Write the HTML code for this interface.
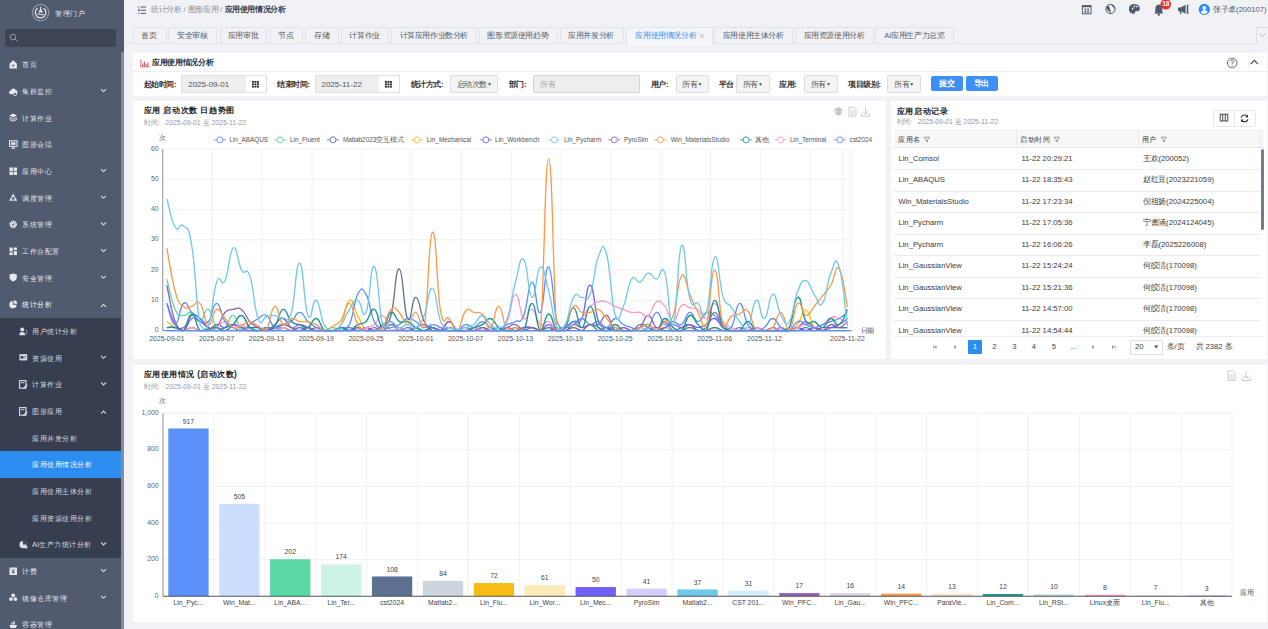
<!DOCTYPE html><html><head><meta charset="utf-8"><style>
html,body{margin:0;padding:0;}
body{width:1268px;height:629px;overflow:hidden;position:relative;background:#f0f2f5;font-family:"Liberation Sans", sans-serif;}
.t{position:absolute;white-space:nowrap;}
.r{position:absolute;}
</style></head><body>
<div class="r" style="left:0px;top:0px;width:124px;height:629px;background:#515a6e;"></div>
<svg class="r" style="left:30px;top:2px;" width="22" height="22" viewBox="0 0 22 22"><circle cx="10.6" cy="10.6" r="8.1" fill="none" stroke="#a3a9b5" stroke-width="1.3" stroke-dasharray="1.6 0.6"/><path d="M13.64 6.26 A5.3 5.3 0 1 1 7.56 6.26" fill="none" stroke="#f4f5f7" stroke-width="1.1"/><path d="M10.1 4.8 H11.3 V7.3 L13.1 10.6 H8.3 L10.1 7.3 Z" fill="#dfe2e7"/><path d="M7.4 12.3 Q9 11.4 10.6 12.4 Q12.2 13.4 13.8 12.3" fill="none" stroke="#f4f5f7" stroke-width="1"/></svg>
<div class="t" style="left:55px;top:8.99px;font-size:7.4px;line-height:9.62px;color:#e8eaef;font-weight:normal;"><span style="font-size:7px;letter-spacing:0.5px;">管理门户</span></div>
<div class="r" style="left:5px;top:29px;width:111px;height:18px;background:#3e4453;border-radius:2px;"></div>
<svg class="r" style="left:9px;top:33px;" width="10" height="10" viewBox="0 0 10 10"><circle cx="4" cy="4" r="2.8" fill="none" stroke="#9aa0ad" stroke-width="0.9"/><path d="M6 6 L8.3 8.3" stroke="#9aa0ad" stroke-width="0.9"/></svg>
<svg class="r" style="left:9px;top:60.1px;" width="9" height="9" viewBox="0 0 9 9"><path d="M0.5 3.8 L4.2 0.3 L7.9 3.8 V8.5 H0.5 Z" fill="#e6e8ec"/><circle cx="4.2" cy="5.6" r="1" fill="#515a6e"/></svg>
<div class="t" style="left:22px;top:60.45px;font-size:7.45px;line-height:9.69px;color:#e3e5ea;font-weight:normal;"><span style="font-size:7px;letter-spacing:0.55px;">首页</span></div>
<svg class="r" style="left:9px;top:86.77px;" width="9" height="9" viewBox="0 0 9 9"><path d="M1.8 7.2 A1.8 1.8 0 0 1 1.8 3.6 A2.6 2.6 0 0 1 6.6 2.9 A2 2 0 0 1 7.4 6.7 Z" fill="#e6e8ec"/><circle cx="6" cy="7" r="1.6" fill="#515a6e" stroke="#e6e8ec" stroke-width="0.8"/></svg>
<div class="t" style="left:22px;top:87.12px;font-size:7.45px;line-height:9.69px;color:#e3e5ea;font-weight:normal;"><span style="font-size:7px;letter-spacing:0.55px;">集群监控</span></div>
<svg class="r" style="left:0px;top:0px;pointer-events:none;" width="124" height="629" viewBox="0 0 124 629"><path d="M101.0 89.167 L103.5 91.667 L106.0 89.167" fill="none" stroke="#cfd2d9" stroke-width="1.1"/></svg>
<svg class="r" style="left:9px;top:113.43px;" width="9" height="9" viewBox="0 0 9 9"><path d="M4.2 0.5 L8 2.5 L4.2 4.5 L0.4 2.5 Z" fill="#e6e8ec"/><path d="M0.4 4.4 L4.2 6.4 L8 4.4" fill="none" stroke="#e6e8ec" stroke-width="1"/><path d="M0.4 6.3 L4.2 8.3 L8 6.3" fill="none" stroke="#e6e8ec" stroke-width="1"/></svg>
<div class="t" style="left:22px;top:113.79px;font-size:7.45px;line-height:9.69px;color:#e3e5ea;font-weight:normal;"><span style="font-size:7px;letter-spacing:0.55px;">计算作业</span></div>
<svg class="r" style="left:9px;top:140.1px;" width="9" height="9" viewBox="0 0 9 9"><rect x="0.5" y="0.8" width="7.5" height="5.6" fill="none" stroke="#e6e8ec" stroke-width="1.1"/><rect x="2" y="2.3" width="4.5" height="2.6" fill="#e6e8ec"/><path d="M2.5 8.3 H6 M4.2 6.4 V8.3" stroke="#e6e8ec" stroke-width="1"/></svg>
<div class="t" style="left:22px;top:140.46px;font-size:7.45px;line-height:9.69px;color:#e3e5ea;font-weight:normal;"><span style="font-size:7px;letter-spacing:0.55px;">图形会话</span></div>
<svg class="r" style="left:9px;top:166.77px;" width="9" height="9" viewBox="0 0 9 9"><rect x="0.5" y="0.5" width="3.4" height="3.4" fill="#e6e8ec"/><rect x="4.6" y="0.5" width="3.4" height="3.4" fill="#e6e8ec"/><rect x="0.5" y="4.6" width="3.4" height="3.4" fill="#e6e8ec"/><rect x="4.6" y="4.6" width="3.4" height="3.4" fill="#e6e8ec"/></svg>
<div class="t" style="left:22px;top:167.12px;font-size:7.45px;line-height:9.69px;color:#e3e5ea;font-weight:normal;"><span style="font-size:7px;letter-spacing:0.55px;">应用中心</span></div>
<svg class="r" style="left:0px;top:0px;pointer-events:none;" width="124" height="629" viewBox="0 0 124 629"><path d="M101.0 169.168 L103.5 171.668 L106.0 169.168" fill="none" stroke="#cfd2d9" stroke-width="1.1"/></svg>
<svg class="r" style="left:9px;top:193.44px;" width="9" height="9" viewBox="0 0 9 9"><path d="M4.2 0.6 L8.2 7.8 H0.2 Z" fill="#e6e8ec"/><path d="M4.2 3.6 L6 6.6 H2.4 Z" fill="#515a6e"/><path d="M2.6 3.8 L3.6 5 M5.8 3.8 L4.8 5 M4.2 7.9 V6.6" stroke="#515a6e" stroke-width="0.6"/></svg>
<div class="t" style="left:22px;top:193.79px;font-size:7.45px;line-height:9.69px;color:#e3e5ea;font-weight:normal;"><span style="font-size:7px;letter-spacing:0.55px;">调度管理</span></div>
<svg class="r" style="left:0px;top:0px;pointer-events:none;" width="124" height="629" viewBox="0 0 124 629"><path d="M101.0 195.835 L103.5 198.335 L106.0 195.835" fill="none" stroke="#cfd2d9" stroke-width="1.1"/></svg>
<svg class="r" style="left:9px;top:220.1px;" width="9" height="9" viewBox="0 0 9 9"><circle cx="4.2" cy="4.4" r="2.9" fill="none" stroke="#e6e8ec" stroke-width="1.9" stroke-dasharray="1.3 0.55"/><circle cx="4.2" cy="4.4" r="2.3" fill="#e6e8ec"/><circle cx="4.2" cy="4.4" r="1" fill="#515a6e"/></svg>
<div class="t" style="left:22px;top:220.46px;font-size:7.45px;line-height:9.69px;color:#e3e5ea;font-weight:normal;"><span style="font-size:7px;letter-spacing:0.55px;">系统管理</span></div>
<svg class="r" style="left:0px;top:0px;pointer-events:none;" width="124" height="629" viewBox="0 0 124 629"><path d="M101.0 222.502 L103.5 225.002 L106.0 222.502" fill="none" stroke="#cfd2d9" stroke-width="1.1"/></svg>
<svg class="r" style="left:9px;top:246.77px;" width="9" height="9" viewBox="0 0 9 9"><rect x="0.5" y="0.5" width="3.2" height="4" fill="#e6e8ec"/><rect x="4.7" y="0.5" width="3.2" height="2.6" fill="#e6e8ec"/><rect x="0.5" y="5.5" width="3.2" height="2.6" fill="#e6e8ec"/><rect x="4.7" y="4.1" width="3.2" height="4" fill="#e6e8ec"/></svg>
<div class="t" style="left:22px;top:247.12px;font-size:7.45px;line-height:9.69px;color:#e3e5ea;font-weight:normal;"><span style="font-size:7px;letter-spacing:0.55px;">工作台配置</span></div>
<svg class="r" style="left:0px;top:0px;pointer-events:none;" width="124" height="629" viewBox="0 0 124 629"><path d="M101.0 249.169 L103.5 251.669 L106.0 249.169" fill="none" stroke="#cfd2d9" stroke-width="1.1"/></svg>
<svg class="r" style="left:9px;top:273.44px;" width="9" height="9" viewBox="0 0 9 9"><path d="M4.2 0.4 L7.8 1.5 V4.6 Q7.6 7.4 4.2 8.6 Q0.8 7.4 0.6 4.6 V1.5 Z" fill="#e6e8ec"/></svg>
<div class="t" style="left:22px;top:273.79px;font-size:7.45px;line-height:9.69px;color:#e3e5ea;font-weight:normal;"><span style="font-size:7px;letter-spacing:0.55px;">安全管理</span></div>
<svg class="r" style="left:0px;top:0px;pointer-events:none;" width="124" height="629" viewBox="0 0 124 629"><path d="M101.0 275.836 L103.5 278.336 L106.0 275.836" fill="none" stroke="#cfd2d9" stroke-width="1.1"/></svg>
<svg class="r" style="left:9px;top:300.1px;" width="9" height="9" viewBox="0 0 9 9"><path d="M3.8 0.9 A3.7 3.7 0 1 0 7.7 4.8 H3.8 Z" fill="#e6e8ec"/><path d="M4.7 0.2 A3.7 3.7 0 0 1 8.3 3.8 H4.7 Z" fill="#e6e8ec"/></svg>
<div class="t" style="left:22px;top:300.46px;font-size:7.45px;line-height:9.69px;color:#ffffff;font-weight:normal;"><span style="font-size:7px;letter-spacing:0.55px;">统计分析</span></div>
<svg class="r" style="left:0px;top:0px;pointer-events:none;" width="124" height="629" viewBox="0 0 124 629"><path d="M101.0 306.903 L103.5 304.403 L106.0 306.903" fill="none" stroke="#e4e6ea" stroke-width="1.1"/></svg>
<div class="r" style="left:0px;top:318px;width:120.5px;height:239.6px;background:#363e4f;"></div>
<svg class="r" style="left:19px;top:326.77px;" width="9" height="9" viewBox="0 0 9 9"><circle cx="3.2" cy="2.5" r="2" fill="#dcdfe5"/><path d="M0.2 8.3 Q0.2 5 3.2 5 Q6.2 5 6.2 8.3 Z" fill="#dcdfe5"/><path d="M6.8 3.5 H8.3 M6.8 5.2 H8.3 M6.8 6.9 H8.3" stroke="#dcdfe5" stroke-width="0.6"/></svg>
<div class="t" style="left:32px;top:327.12px;font-size:7.45px;line-height:9.69px;color:#d9dce2;font-weight:normal;"><span style="font-size:7px;letter-spacing:0.55px;">用户统计分析</span></div>
<svg class="r" style="left:19px;top:353.44px;" width="9" height="9" viewBox="0 0 9 9"><rect x="0.4" y="1.2" width="7.8" height="6.2" fill="#dcdfe5"/><rect x="1.5" y="3" width="3" height="2.6" fill="#363e4f"/><path d="M5.3 3.5 H7.2 M5.3 5 H7.2" stroke="#363e4f" stroke-width="0.6"/></svg>
<div class="t" style="left:32px;top:353.79px;font-size:7.45px;line-height:9.69px;color:#d9dce2;font-weight:normal;"><span style="font-size:7px;letter-spacing:0.55px;">资源使用</span></div>
<svg class="r" style="left:0px;top:0px;pointer-events:none;" width="124" height="629" viewBox="0 0 124 629"><path d="M101.0 355.837 L103.5 358.337 L106.0 355.837" fill="none" stroke="#cfd2d9" stroke-width="1.1"/></svg>
<svg class="r" style="left:19px;top:380.1px;" width="9" height="9" viewBox="0 0 9 9"><rect x="0.6" y="0.6" width="6.4" height="7.6" fill="none" stroke="#dcdfe5" stroke-width="1.1"/><rect x="2" y="2.2" width="3.4" height="1" fill="#dcdfe5"/><path d="M4.5 8.4 L8.2 4.7" stroke="#dcdfe5" stroke-width="1.4"/></svg>
<div class="t" style="left:32px;top:380.46px;font-size:7.45px;line-height:9.69px;color:#d9dce2;font-weight:normal;"><span style="font-size:7px;letter-spacing:0.55px;">计算作业</span></div>
<svg class="r" style="left:0px;top:0px;pointer-events:none;" width="124" height="629" viewBox="0 0 124 629"><path d="M101.0 382.504 L103.5 385.004 L106.0 382.504" fill="none" stroke="#cfd2d9" stroke-width="1.1"/></svg>
<svg class="r" style="left:19px;top:406.77px;" width="9" height="9" viewBox="0 0 9 9"><rect x="0.6" y="0.6" width="6.4" height="7.6" fill="none" stroke="#dcdfe5" stroke-width="1.1"/><rect x="2" y="2.2" width="3.4" height="1" fill="#dcdfe5"/><path d="M4.5 8.4 L8.2 4.7" stroke="#dcdfe5" stroke-width="1.4"/></svg>
<div class="t" style="left:32px;top:407.13px;font-size:7.45px;line-height:9.69px;color:#d9dce2;font-weight:normal;"><span style="font-size:7px;letter-spacing:0.55px;">图形应用</span></div>
<svg class="r" style="left:0px;top:0px;pointer-events:none;" width="124" height="629" viewBox="0 0 124 629"><path d="M101.0 413.5710000000001 L103.5 411.0710000000001 L106.0 413.5710000000001" fill="none" stroke="#cfd2d9" stroke-width="1.1"/></svg>
<div class="t" style="left:32px;top:433.79px;font-size:7.45px;line-height:9.69px;color:#d9dce2;font-weight:normal;"><span style="font-size:7px;letter-spacing:0.55px;">应用并发分析</span></div>
<div class="r" style="left:0px;top:451.27px;width:120.5px;height:26.67px;background:#2d8cf0;"></div>
<div class="t" style="left:32px;top:460.46px;font-size:7.45px;line-height:9.69px;color:#ffffff;font-weight:normal;"><span style="font-size:7px;letter-spacing:0.55px;">应用使用情况分析</span></div>
<div class="t" style="left:32px;top:487.13px;font-size:7.45px;line-height:9.69px;color:#d9dce2;font-weight:normal;"><span style="font-size:7px;letter-spacing:0.55px;">应用使用主体分析</span></div>
<div class="t" style="left:32px;top:513.79px;font-size:7.45px;line-height:9.69px;color:#d9dce2;font-weight:normal;"><span style="font-size:7px;letter-spacing:0.55px;">应用资源使用分析</span></div>
<svg class="r" style="left:19px;top:540.11px;" width="9" height="9" viewBox="0 0 9 9"><circle cx="4" cy="4.6" r="3.6" fill="#dcdfe5"/><path d="M4 4.6 L4 1 A3.6 3.6 0 0 1 7.6 4.6 Z" fill="#363e4f"/><circle cx="7" cy="7.2" r="1.4" fill="#dcdfe5"/></svg>
<div class="t" style="left:32px;top:540.46px;font-size:7.45px;line-height:9.69px;color:#d9dce2;font-weight:normal;">AI<span style="font-size:7px;letter-spacing:0.55px;">生产力统计分析</span></div>
<svg class="r" style="left:0px;top:0px;pointer-events:none;" width="124" height="629" viewBox="0 0 124 629"><path d="M101.0 542.506 L103.5 545.006 L106.0 542.506" fill="none" stroke="#cfd2d9" stroke-width="1.1"/></svg>
<svg class="r" style="left:9px;top:566.77px;" width="9" height="9" viewBox="0 0 9 9"><rect x="0.5" y="0.5" width="7.5" height="7.5" fill="#e6e8ec"/><path d="M2.6 1.9 L4.25 4.1 L5.9 1.9 M4.25 4.1 V6.8 M2.9 4.5 H5.6 M2.9 5.6 H5.6" stroke="#515a6e" stroke-width="0.7" fill="none"/></svg>
<div class="t" style="left:22px;top:567.13px;font-size:7.45px;line-height:9.69px;color:#e3e5ea;font-weight:normal;"><span style="font-size:7px;letter-spacing:0.55px;">计费</span></div>
<svg class="r" style="left:0px;top:0px;pointer-events:none;" width="124" height="629" viewBox="0 0 124 629"><path d="M101.0 569.173 L103.5 571.673 L106.0 569.173" fill="none" stroke="#cfd2d9" stroke-width="1.1"/></svg>
<svg class="r" style="left:9px;top:593.44px;" width="9" height="9" viewBox="0 0 9 9"><circle cx="4.2" cy="2.3" r="1.9" fill="#e6e8ec"/><circle cx="2" cy="6.1" r="1.9" fill="#e6e8ec"/><circle cx="6.4" cy="6.1" r="1.9" fill="#e6e8ec"/></svg>
<div class="t" style="left:22px;top:593.8px;font-size:7.45px;line-height:9.69px;color:#e3e5ea;font-weight:normal;"><span style="font-size:7px;letter-spacing:0.55px;">镜像仓库管理</span></div>
<svg class="r" style="left:0px;top:0px;pointer-events:none;" width="124" height="629" viewBox="0 0 124 629"><path d="M101.0 595.84 L103.5 598.34 L106.0 595.84" fill="none" stroke="#cfd2d9" stroke-width="1.1"/></svg>
<svg class="r" style="left:9px;top:620.11px;" width="9" height="9" viewBox="0 0 9 9"><path d="M0.4 5 H8 L6.8 8 H1.6 Z" fill="#e6e8ec"/><rect x="2.3" y="2.6" width="1.5" height="2" fill="#e6e8ec"/><rect x="4.3" y="1.2" width="1.5" height="3.4" fill="#e6e8ec"/></svg>
<div class="t" style="left:22px;top:620.46px;font-size:7.45px;line-height:9.69px;color:#e3e5ea;font-weight:normal;"><span style="font-size:7px;letter-spacing:0.55px;">容器管理</span></div>
<div class="r" style="left:120.5px;top:52px;width:3.5px;height:577px;background:#858b99;"></div>
<svg class="r" style="left:137px;top:6px;" width="10" height="9" viewBox="0 0 10 9"><path d="M3.5 1 H9 M3.5 4.2 H9 M3.5 7.4 H9 M0.8 1 H2 M0.8 7.4 H2" stroke="#515a6e" stroke-width="1"/><path d="M2.6 2.6 L0.6 4.2 L2.6 5.8 Z" fill="#515a6e"/></svg>
<div class="t" style="left:151px;top:5.36px;font-size:7.6px;line-height:9.88px;color:#333;font-weight:normal;"><span style="color:#888d99"><span style="font-size:8px;letter-spacing:-0.4px;">统计分析</span> / <span style="font-size:8px;letter-spacing:-0.4px;">图形应用</span> / </span><span style="color:#2b303b;-webkit-text-stroke:0.25px #2b303b"><span style="font-size:8px;letter-spacing:-0.4px;">应用使用情况分析</span></span></div>
<svg class="r" style="left:1081px;top:4px;" width="12" height="12" viewBox="0 0 12 12"><rect x="1.4" y="1.6" width="8.6" height="8.2" fill="none" stroke="#515a6e" stroke-width="1"/><rect x="1.4" y="1.6" width="8.6" height="1.6" fill="#515a6e"/><rect x="3.4" y="4.6" width="1.8" height="1.7" fill="#515a6e"/><rect x="6.2" y="4.6" width="1.8" height="1.7" fill="#515a6e"/><rect x="3.4" y="7" width="1.8" height="1.7" fill="#515a6e"/><rect x="6.2" y="7" width="1.8" height="1.7" fill="#515a6e"/></svg>
<svg class="r" style="left:1104px;top:3px;" width="13" height="13" viewBox="0 0 13 13"><circle cx="6.5" cy="6" r="4.6" fill="none" stroke="#515a6e" stroke-width="1"/><path d="M3 3.2 Q4.6 2.4 5.6 3.6 Q5 5 6 6 Q7 7.5 6.4 10.4 Q5.2 8.5 4.2 7.4 Q2.4 6.6 2.6 4.6 Z M7.6 1.8 Q7.6 3.2 8.8 3.8 Q10.4 4.6 10.9 6.8 Q11 4 9.6 2.6 Z" fill="#515a6e"/></svg>
<svg class="r" style="left:1129px;top:3px;" width="12" height="12" viewBox="0 0 12 12"><path d="M6 1.2 A4.9 4.9 0 1 0 5.2 10.8 Q6.2 10.8 6 9.6 Q5.6 8.2 7 8.2 H8.6 Q10.9 8.2 10.9 5.8 Q10.7 1.2 6 1.2 Z" fill="#515a6e"/><circle cx="3.6" cy="5.6" r="0.9" fill="#f0f2f5"/><circle cx="5.4" cy="3.4" r="0.9" fill="#f0f2f5"/><circle cx="8" cy="3.6" r="0.9" fill="#f0f2f5"/></svg>
<svg class="r" style="left:1153px;top:3px;" width="12" height="13" viewBox="0 0 12 13"><path d="M5.8 1.5 Q9.3 1.8 9.3 6 V9 L10.4 10.4 H1.2 L2.3 9 V6 Q2.3 1.8 5.8 1.5 Z" fill="#515a6e"/><circle cx="5.8" cy="11.6" r="1.2" fill="#515a6e"/></svg>
<svg class="r" style="left:1160px;top:-1px;" width="12" height="11" viewBox="0 0 12 11"><circle cx="5.8" cy="5.3" r="5.3" fill="#ed2c2c"/></svg>
<div class="t" style="left:1165.8px;transform:translateX(-50%);top:0.31px;font-size:6.6px;line-height:8.58px;color:#fff;font-weight:bold;">18</div>
<svg class="r" style="left:1177px;top:3px;" width="12" height="13" viewBox="0 0 12 13"><path d="M1 4.6 H3.6 L8.6 1.8 V10.8 L3.6 8 H1 Z" fill="#515a6e"/><rect x="9.8" y="1.6" width="1.5" height="9.4" fill="#515a6e"/><path d="M2.4 8 L3.2 11 H4.6 L4 8" fill="#515a6e"/></svg>
<svg class="r" style="left:1198px;top:3px;" width="13" height="13" viewBox="0 0 13 13"><circle cx="6.3" cy="6.4" r="5.6" fill="#2d8cf0"/><circle cx="6.3" cy="4.8" r="1.9" fill="#fff"/><path d="M2.9 9.6 Q3.4 6.9 6.3 6.9 Q9.2 6.9 9.7 9.6 Q8.4 11 6.3 11 Q4.2 11 2.9 9.6 Z" fill="#fff"/></svg>
<div class="t" style="left:1213px;top:4.86px;font-size:7.6px;line-height:9.88px;color:#515a6e;font-weight:normal;"><span style="font-size:8px;letter-spacing:-0.3px;">张子卓</span>(200107)</div>
<div class="r" style="left:132.5px;top:27.3px;width:32.0px;height:15.7px;background:#f0f2f5;border:1px solid #e0e3e7;border-bottom:none;border-radius:2px 2px 0 0;"></div>
<div class="t" style="left:149.0px;transform:translateX(-50%);top:30.73px;font-size:7.5px;line-height:9.75px;color:#555a66;font-weight:normal;"><span style="font-size:8px;letter-spacing:-0.4px;">首页</span></div>
<div class="r" style="left:168.2px;top:27.3px;width:47.0px;height:15.7px;background:#f0f2f5;border:1px solid #e0e3e7;border-bottom:none;border-radius:2px 2px 0 0;"></div>
<div class="t" style="left:192.2px;transform:translateX(-50%);top:30.73px;font-size:7.5px;line-height:9.75px;color:#555a66;font-weight:normal;"><span style="font-size:8px;letter-spacing:-0.4px;">安全审核</span></div>
<div class="r" style="left:219.5px;top:27.3px;width:45.9px;height:15.7px;background:#f0f2f5;border:1px solid #e0e3e7;border-bottom:none;border-radius:2px 2px 0 0;"></div>
<div class="t" style="left:242.95px;transform:translateX(-50%);top:30.73px;font-size:7.5px;line-height:9.75px;color:#555a66;font-weight:normal;"><span style="font-size:8px;letter-spacing:-0.4px;">应用审批</span></div>
<div class="r" style="left:269.7px;top:27.3px;width:31.7px;height:15.7px;background:#f0f2f5;border:1px solid #e0e3e7;border-bottom:none;border-radius:2px 2px 0 0;"></div>
<div class="t" style="left:286.04999999999995px;transform:translateX(-50%);top:30.73px;font-size:7.5px;line-height:9.75px;color:#555a66;font-weight:normal;"><span style="font-size:8px;letter-spacing:-0.4px;">节点</span></div>
<div class="r" style="left:305.4px;top:27.3px;width:31.9px;height:15.7px;background:#f0f2f5;border:1px solid #e0e3e7;border-bottom:none;border-radius:2px 2px 0 0;"></div>
<div class="t" style="left:321.85px;transform:translateX(-50%);top:30.73px;font-size:7.5px;line-height:9.75px;color:#555a66;font-weight:normal;"><span style="font-size:8px;letter-spacing:-0.4px;">存储</span></div>
<div class="r" style="left:340.8px;top:27.3px;width:46.7px;height:15.7px;background:#f0f2f5;border:1px solid #e0e3e7;border-bottom:none;border-radius:2px 2px 0 0;"></div>
<div class="t" style="left:364.65px;transform:translateX(-50%);top:30.73px;font-size:7.5px;line-height:9.75px;color:#555a66;font-weight:normal;"><span style="font-size:8px;letter-spacing:-0.4px;">计算作业</span></div>
<div class="r" style="left:391.2px;top:27.3px;width:84.2px;height:15.7px;background:#f0f2f5;border:1px solid #e0e3e7;border-bottom:none;border-radius:2px 2px 0 0;"></div>
<div class="t" style="left:433.79999999999995px;transform:translateX(-50%);top:30.73px;font-size:7.5px;line-height:9.75px;color:#555a66;font-weight:normal;"><span style="font-size:8px;letter-spacing:-0.4px;">计算应用作业数分析</span></div>
<div class="r" style="left:479px;top:27.3px;width:76.8px;height:15.7px;background:#f0f2f5;border:1px solid #e0e3e7;border-bottom:none;border-radius:2px 2px 0 0;"></div>
<div class="t" style="left:517.9px;transform:translateX(-50%);top:30.73px;font-size:7.5px;line-height:9.75px;color:#555a66;font-weight:normal;"><span style="font-size:8px;letter-spacing:-0.4px;">图形资源使用趋势</span></div>
<div class="r" style="left:559.5px;top:27.3px;width:62.0px;height:15.7px;background:#f0f2f5;border:1px solid #e0e3e7;border-bottom:none;border-radius:2px 2px 0 0;"></div>
<div class="t" style="left:591.0px;transform:translateX(-50%);top:30.73px;font-size:7.5px;line-height:9.75px;color:#555a66;font-weight:normal;"><span style="font-size:8px;letter-spacing:-0.4px;">应用并发分析</span></div>
<div class="r" style="left:625.9px;top:27.3px;width:84.8px;height:16.5px;background:#f3f5f8;border:1px solid #e0e3e7;border-bottom:none;border-radius:2px 2px 0 0;"></div>
<div class="t" style="left:635.4px;top:30.73px;font-size:7.5px;line-height:9.75px;color:#3a8ef0;font-weight:normal;"><span style="font-size:8px;letter-spacing:-0.4px;">应用使用情况分析</span></div>
<svg class="r" style="left:697.7px;top:31.5px;" width="8" height="8" viewBox="0 0 8 8"><path d="M1.5 1.5 L6 6 M6 1.5 L1.5 6" stroke="#aaa" stroke-width="0.8"/></svg>
<div class="r" style="left:714.4px;top:27.3px;width:76.7px;height:15.7px;background:#f0f2f5;border:1px solid #e0e3e7;border-bottom:none;border-radius:2px 2px 0 0;"></div>
<div class="t" style="left:753.25px;transform:translateX(-50%);top:30.73px;font-size:7.5px;line-height:9.75px;color:#555a66;font-weight:normal;"><span style="font-size:8px;letter-spacing:-0.4px;">应用使用主体分析</span></div>
<div class="r" style="left:795.4px;top:27.3px;width:76.2px;height:15.7px;background:#f0f2f5;border:1px solid #e0e3e7;border-bottom:none;border-radius:2px 2px 0 0;"></div>
<div class="t" style="left:834.0px;transform:translateX(-50%);top:30.73px;font-size:7.5px;line-height:9.75px;color:#555a66;font-weight:normal;"><span style="font-size:8px;letter-spacing:-0.4px;">应用资源使用分析</span></div>
<div class="r" style="left:875.3px;top:27.3px;width:77.0px;height:15.7px;background:#f0f2f5;border:1px solid #e0e3e7;border-bottom:none;border-radius:2px 2px 0 0;"></div>
<div class="t" style="left:914.3px;transform:translateX(-50%);top:30.73px;font-size:7.5px;line-height:9.75px;color:#555a66;font-weight:normal;">AI<span style="font-size:8px;letter-spacing:-0.4px;">应用生产力总览</span></div>
<div class="r" style="left:124px;top:43px;width:501.9px;height:0.8px;background:#e3e5e9;"></div>
<div class="r" style="left:711.7px;top:43px;width:556.3px;height:0.8px;background:#e3e5e9;"></div>
<div class="r" style="left:1255.5px;top:27.2px;width:14px;height:15.8px;background:#f0f2f5;border:1px solid #dcdee2;border-bottom:none;"></div>
<svg class="r" style="left:1258px;top:31px;" width="10" height="8" viewBox="0 0 10 8"><path d="M1.5 2.5 L4.5 5.5 L7.5 2.5" fill="none" stroke="#b0b4bc" stroke-width="0.9"/></svg>
<div class="r" style="left:133px;top:53px;width:1134px;height:42.7px;background:#fff;"></div>
<div class="r" style="left:133px;top:71.2px;width:1134px;height:0.7px;background:#eceef1;"></div>
<svg class="r" style="left:140px;top:58.5px;" width="10" height="9" viewBox="0 0 10 9"><path d="M0.8 0.5 V7.8 H9.5" fill="none" stroke="#c6626b" stroke-width="0.9"/><path d="M2.6 7.4 V4.5 M4.4 7.4 V2.6 M6.2 7.4 V5 M8 7.4 V3.4" stroke="#c55a66" stroke-width="1.1"/></svg>
<div class="t" style="left:152px;top:58.36px;font-size:7.6px;line-height:9.88px;color:#2a2f3a;font-weight:bold;"><span style="font-size:8px;letter-spacing:-0.35px;">应用使用情况分析</span></div>
<svg class="r" style="left:1226px;top:56.5px;" width="12" height="12" viewBox="0 0 12 12"><circle cx="6.2" cy="6" r="4.8" fill="none" stroke="#515a6e" stroke-width="0.9"/><path d="M4.6 4.6 Q4.6 3 6.2 3 Q7.8 3 7.8 4.5 Q7.8 5.5 6.2 6 V7" fill="none" stroke="#515a6e" stroke-width="0.9"/><circle cx="6.2" cy="8.5" r="0.6" fill="#515a6e"/></svg>
<div class="r" style="left:1247.5px;top:53px;width:0.7px;height:18.2px;background:#f1f2f4;"></div>
<svg class="r" style="left:1249px;top:58px;" width="11" height="8" viewBox="0 0 11 8"><path d="M1.8 6 L5.4 2.4 L9 6" fill="none" stroke="#515a6e" stroke-width="1.3"/></svg>
<div class="t" style="left:143.7px;top:79.92px;font-size:7.5px;line-height:9.75px;color:#333;font-weight:bold;"><span style="font-size:8px;letter-spacing:-0.4px;">起始时间</span>:</div>
<div class="r" style="left:181.2px;top:75.3px;width:83.5px;height:15.4px;border:1px solid #dfe1e5;border-radius:0px;background:#fff;"></div>
<div class="r" style="left:182.2px;top:76.3px;width:63.8px;height:15.4px;background:#eeeeee;"></div>
<div class="t" style="left:188.2px;top:79.6px;font-size:8px;line-height:10.4px;color:#555;font-weight:normal;">2025-09-01</div>
<svg class="r" style="left:252px;top:81px;" width="7" height="7" viewBox="0 0 7 7"><rect x="0.0" y="0.0" width="1.9" height="1.8" fill="#2a2a2a"/><rect x="0.0" y="2.4" width="1.9" height="1.8" fill="#2a2a2a"/><rect x="0.0" y="4.8" width="1.9" height="1.8" fill="#2a2a2a"/><rect x="2.5" y="0.0" width="1.9" height="1.8" fill="#2a2a2a"/><rect x="2.5" y="2.4" width="1.9" height="1.8" fill="#2a2a2a"/><rect x="2.5" y="4.8" width="1.9" height="1.8" fill="#2a2a2a"/><rect x="5.0" y="0.0" width="1.9" height="1.8" fill="#2a2a2a"/><rect x="5.0" y="2.4" width="1.9" height="1.8" fill="#2a2a2a"/><rect x="5.0" y="4.8" width="1.9" height="1.8" fill="#2a2a2a"/></svg>
<div class="t" style="left:277.2px;top:79.92px;font-size:7.5px;line-height:9.75px;color:#333;font-weight:bold;"><span style="font-size:8px;letter-spacing:-0.4px;">结束时间</span>:</div>
<div class="r" style="left:314.5px;top:75.3px;width:83.1px;height:15.4px;border:1px solid #dfe1e5;border-radius:0px;background:#fff;"></div>
<div class="r" style="left:315.5px;top:76.3px;width:63.5px;height:15.4px;background:#eeeeee;"></div>
<div class="t" style="left:321.5px;top:79.6px;font-size:8px;line-height:10.4px;color:#555;font-weight:normal;">2025-11-22</div>
<svg class="r" style="left:385px;top:81px;" width="7" height="7" viewBox="0 0 7 7"><rect x="0.0" y="0.0" width="1.9" height="1.8" fill="#2a2a2a"/><rect x="0.0" y="2.4" width="1.9" height="1.8" fill="#2a2a2a"/><rect x="0.0" y="4.8" width="1.9" height="1.8" fill="#2a2a2a"/><rect x="2.5" y="0.0" width="1.9" height="1.8" fill="#2a2a2a"/><rect x="2.5" y="2.4" width="1.9" height="1.8" fill="#2a2a2a"/><rect x="2.5" y="4.8" width="1.9" height="1.8" fill="#2a2a2a"/><rect x="5.0" y="0.0" width="1.9" height="1.8" fill="#2a2a2a"/><rect x="5.0" y="2.4" width="1.9" height="1.8" fill="#2a2a2a"/><rect x="5.0" y="4.8" width="1.9" height="1.8" fill="#2a2a2a"/></svg>
<div class="t" style="left:410.5px;top:79.92px;font-size:7.5px;line-height:9.75px;color:#333;font-weight:bold;"><span style="font-size:8px;letter-spacing:-0.4px;">统计方式</span>:</div>
<div class="r" style="left:450.3px;top:75.3px;width:46.1px;height:15.3px;border:1px solid #dedede;border-radius:2px;background:#f4f4f4;"></div>
<div class="t" style="left:474.35px;transform:translateX(-50%);top:79.92px;font-size:7.5px;line-height:9.75px;color:#555;font-weight:normal;"><span style="font-size:8px;letter-spacing:-0.4px;">启动次数</span><span style="font-size:5px;vertical-align:1px;">▼</span></div>
<div class="t" style="left:508.7px;top:79.92px;font-size:7.5px;line-height:9.75px;color:#333;font-weight:bold;"><span style="font-size:8px;letter-spacing:-0.4px;">部门</span>:</div>
<div class="r" style="left:533.2px;top:75.3px;width:104.8px;height:15.3px;border:1px solid #d3d3d3;border-radius:2px;background:#eeeeee;"></div>
<div class="t" style="left:540px;top:79.92px;font-size:7.5px;line-height:9.75px;color:#a6a6a6;font-weight:normal;"><span style="font-size:8px;letter-spacing:-0.4px;">所有</span></div>
<div class="t" style="left:650.8px;top:79.92px;font-size:7.5px;line-height:9.75px;color:#333;font-weight:bold;"><span style="font-size:8px;letter-spacing:-0.4px;">用户</span>:</div>
<div class="r" style="left:676.1px;top:75.3px;width:30.6px;height:15.3px;border:1px solid #dedede;border-radius:2px;background:#f4f4f4;"></div>
<div class="t" style="left:692.4000000000001px;transform:translateX(-50%);top:79.92px;font-size:7.5px;line-height:9.75px;color:#555;font-weight:normal;"><span style="font-size:8px;letter-spacing:-0.4px;">所有</span><span style="font-size:5px;vertical-align:1px;">▼</span></div>
<div class="t" style="left:718.6px;top:79.92px;font-size:7.5px;line-height:9.75px;color:#333;font-weight:bold;"><span style="font-size:8px;letter-spacing:-0.4px;">平台</span></div>
<div class="r" style="left:736px;top:75.3px;width:31.5px;height:15.3px;border:1px solid #dedede;border-radius:2px;background:#f4f4f4;"></div>
<div class="t" style="left:752.75px;transform:translateX(-50%);top:79.92px;font-size:7.5px;line-height:9.75px;color:#555;font-weight:normal;"><span style="font-size:8px;letter-spacing:-0.4px;">所有</span><span style="font-size:5px;vertical-align:1px;">▼</span></div>
<div class="t" style="left:779px;top:79.92px;font-size:7.5px;line-height:9.75px;color:#333;font-weight:bold;"><span style="font-size:8px;letter-spacing:-0.4px;">应用</span>:</div>
<div class="r" style="left:804px;top:75.3px;width:31.5px;height:15.3px;border:1px solid #dedede;border-radius:2px;background:#f4f4f4;"></div>
<div class="t" style="left:820.75px;transform:translateX(-50%);top:79.92px;font-size:7.5px;line-height:9.75px;color:#555;font-weight:normal;"><span style="font-size:8px;letter-spacing:-0.4px;">所有</span><span style="font-size:5px;vertical-align:1px;">▼</span></div>
<div class="t" style="left:848px;top:79.92px;font-size:7.5px;line-height:9.75px;color:#333;font-weight:bold;"><span style="font-size:8px;letter-spacing:-0.4px;">项目级别</span>:</div>
<div class="r" style="left:887.2px;top:75.3px;width:31.6px;height:15.3px;border:1px solid #dedede;border-radius:2px;background:#f4f4f4;"></div>
<div class="t" style="left:904.0px;transform:translateX(-50%);top:79.92px;font-size:7.5px;line-height:9.75px;color:#555;font-weight:normal;"><span style="font-size:8px;letter-spacing:-0.4px;">所有</span><span style="font-size:5px;vertical-align:1px;">▼</span></div>
<div class="r" style="left:930.7px;top:76.1px;width:32.1px;height:15.4px;background:#3e8ef7;border-radius:2px;"></div>
<div class="t" style="left:946.75px;transform:translateX(-50%);top:79.42px;font-size:7.5px;line-height:9.75px;color:#fff;font-weight:bold;"><span style="font-size:8px;letter-spacing:-0.4px;">提交</span></div>
<div class="r" style="left:965.5px;top:76.1px;width:32.1px;height:15.4px;background:#3e8ef7;border-radius:2px;"></div>
<div class="t" style="left:981.5px;transform:translateX(-50%);top:79.42px;font-size:7.5px;line-height:9.75px;color:#fff;font-weight:bold;"><span style="font-size:8px;letter-spacing:-0.4px;">导出</span></div>
<div class="r" style="left:133px;top:101px;width:753px;height:258.2px;background:#fff;"></div>
<div class="r" style="left:891px;top:101px;width:376px;height:257.5px;background:#fff;"></div>
<div class="r" style="left:133px;top:364.8px;width:1134px;height:257.7px;background:#fff;"></div>
<div class="t" style="left:143.7px;top:105.24px;font-size:8.4px;line-height:10.92px;color:#222;font-weight:bold;"><span style="font-size:8px;letter-spacing:0.65px;">应用</span> <span style="font-size:8px;letter-spacing:0.65px;">启动次数</span> <span style="font-size:8px;letter-spacing:0.65px;">日趋势图</span></div>
<div class="t" style="left:143.7px;top:119.11px;font-size:6.9px;line-height:8.97px;color:#9a9a9a;font-weight:normal;"><span style="font-size:7px;">时间</span>:&nbsp;&nbsp;&nbsp;2025-09-01 <span style="font-size:7px;">至</span> 2025-11-22</div>
<svg class="r" style="left:833px;top:106px;" width="38" height="12" viewBox="0 0 38 12"><path d="M5.5 1.5 L9.5 3.5 L5.5 5.5 L1.5 3.5 Z M1.5 5.5 L5.5 7.5 L9.5 5.5 M1.5 7.3 L5.5 9.3 L9.5 7.3" fill="#c4c4c4" stroke="#bbb" stroke-width="0.6"/><path d="M16 1.2 H20.5 L23 3.7 V10.2 H16 Z" fill="none" stroke="#bbb" stroke-width="0.8"/><path d="M17.5 5 H21.5 M17.5 6.8 H21.5 M17.5 8.5 H21.5" stroke="#bbb" stroke-width="0.6"/><path d="M32.5 1.2 V8 M29.8 5.5 L32.5 8.2 L35.2 5.5 M28.5 7.5 V10.2 H36.5 V7.5" fill="none" stroke="#bbb" stroke-width="0.8"/></svg>
<div class="t" style="left:162px;transform:translateX(-50%);top:133.58px;font-size:6.8px;line-height:8.84px;color:#666;font-weight:normal;"><span style="font-size:7px;letter-spacing:-0.2px;">次</span></div>
<svg class="r" style="left:0px;top:0px;pointer-events:none;" width="1268" height="629" viewBox="0 0 1268 629"><path d="M162.7 300.35 H851.6" stroke="#eeeeee" stroke-width="0.8"/><path d="M162.7 270.1 H851.6" stroke="#eeeeee" stroke-width="0.8"/><path d="M162.7 239.85 H851.6" stroke="#eeeeee" stroke-width="0.8"/><path d="M162.7 209.6 H851.6" stroke="#eeeeee" stroke-width="0.8"/><path d="M162.7 179.35 H851.6" stroke="#eeeeee" stroke-width="0.8"/><path d="M162.7 149.1 H851.6" stroke="#eeeeee" stroke-width="0.8"/><path d="M212.50 149.10000000000002 V330.6" stroke="#eeeeee" stroke-width="0.8"/><path d="M262.30 149.10000000000002 V330.6" stroke="#eeeeee" stroke-width="0.8"/><path d="M312.10 149.10000000000002 V330.6" stroke="#eeeeee" stroke-width="0.8"/><path d="M361.90 149.10000000000002 V330.6" stroke="#eeeeee" stroke-width="0.8"/><path d="M411.70 149.10000000000002 V330.6" stroke="#eeeeee" stroke-width="0.8"/><path d="M461.50 149.10000000000002 V330.6" stroke="#eeeeee" stroke-width="0.8"/><path d="M511.30 149.10000000000002 V330.6" stroke="#eeeeee" stroke-width="0.8"/><path d="M561.10 149.10000000000002 V330.6" stroke="#eeeeee" stroke-width="0.8"/><path d="M610.90 149.10000000000002 V330.6" stroke="#eeeeee" stroke-width="0.8"/><path d="M660.70 149.10000000000002 V330.6" stroke="#eeeeee" stroke-width="0.8"/><path d="M710.50 149.10000000000002 V330.6" stroke="#eeeeee" stroke-width="0.8"/><path d="M760.30 149.10000000000002 V330.6" stroke="#eeeeee" stroke-width="0.8"/><path d="M810.10 149.10000000000002 V330.6" stroke="#eeeeee" stroke-width="0.8"/><path d="M843.30 149.10000000000002 V330.6" stroke="#eeeeee" stroke-width="0.8"/><path d="M851.60 149.10000000000002 V330.6" stroke="#eeeeee" stroke-width="0.8"/><path d="M166.85 330.60 C168.92 330.60 171.00 330.60 175.15 330.60 C179.30 330.60 179.30 330.60 183.45 330.60 C187.60 330.60 187.60 330.60 191.75 330.60 C195.90 330.60 195.90 330.60 200.05 330.60 C204.20 330.60 204.20 330.60 208.35 330.60 C212.50 330.60 212.50 330.60 216.65 330.60 C220.80 330.60 220.80 330.60 224.95 330.60 C229.10 330.60 229.10 330.60 233.25 330.60 C237.40 330.60 237.40 330.60 241.55 330.60 C245.70 330.60 245.70 330.60 249.85 330.60 C254.00 330.60 254.00 330.60 258.15 330.60 C262.30 330.60 262.30 330.60 266.45 330.60 C270.60 330.60 270.60 330.60 274.75 330.60 C278.90 330.60 278.90 330.60 283.05 330.60 C287.20 330.60 287.20 330.60 291.35 330.60 C295.50 330.60 295.50 330.60 299.65 330.60 C303.80 330.60 303.80 330.60 307.95 330.60 C312.10 330.60 312.10 330.60 316.25 330.60 C320.40 330.60 320.40 330.60 324.55 330.60 C328.70 330.60 328.70 330.60 332.85 330.60 C337.00 330.60 337.00 330.60 341.15 330.60 C345.30 330.60 345.30 330.60 349.45 330.60 C353.60 330.60 353.60 330.60 357.75 330.60 C361.90 330.60 361.90 330.60 366.05 330.60 C370.20 330.60 370.20 330.60 374.35 330.60 C378.50 330.60 378.50 330.60 382.65 330.60 C386.80 330.60 386.80 330.60 390.95 330.60 C395.10 330.60 395.10 330.60 399.25 330.60 C403.40 330.60 403.40 330.60 407.55 330.60 C411.70 330.60 411.70 330.60 415.85 330.60 C420.00 330.60 420.00 330.60 424.15 330.60 C428.30 330.60 428.30 330.60 432.45 330.60 C436.60 330.60 436.60 330.60 440.75 330.60 C444.90 330.60 444.90 330.60 449.05 330.60 C453.20 330.60 453.20 330.60 457.35 330.60 C461.50 330.60 461.50 330.60 465.65 330.60 C469.80 330.60 469.80 330.60 473.95 330.60 C478.10 330.60 478.10 330.60 482.25 330.60 C486.40 330.60 486.40 330.60 490.55 330.60 C494.70 330.60 494.70 330.60 498.85 330.60 C503.00 330.60 503.00 330.60 507.15 330.60 C511.30 330.60 511.30 330.60 515.45 330.60 C519.60 330.60 519.60 330.60 523.75 330.60 C527.90 330.60 527.90 330.60 532.05 330.60 C536.20 330.60 536.20 330.60 540.35 330.60 C544.50 330.60 544.50 330.60 548.65 330.60 C552.80 330.60 552.80 330.60 556.95 330.60 C561.10 330.60 561.10 330.60 565.25 330.60 C569.40 330.60 569.40 330.60 573.55 330.60 C577.70 330.60 577.70 330.60 581.85 330.60 C586.00 330.60 586.00 330.60 590.15 330.60 C594.30 330.60 594.30 330.60 598.45 330.60 C602.60 330.60 602.60 330.60 606.75 330.60 C610.90 330.60 610.90 330.60 615.05 330.60 C619.20 330.60 619.20 330.60 623.35 330.60 C627.50 330.60 627.50 330.60 631.65 330.60 C635.80 330.60 635.80 330.60 639.95 330.60 C644.10 330.60 644.10 330.60 648.25 330.60 C652.40 330.60 652.40 330.60 656.55 330.60 C660.70 330.60 660.70 330.60 664.85 330.60 C669.00 330.60 669.00 330.60 673.15 330.60 C677.30 330.60 677.30 330.60 681.45 330.60 C685.60 330.60 685.60 330.60 689.75 330.60 C693.90 330.60 693.90 330.60 698.05 330.60 C702.20 330.60 702.20 330.60 706.35 330.60 C710.50 330.60 710.50 330.60 714.65 330.60 C718.80 330.60 718.80 330.60 722.95 330.60 C727.10 330.60 727.10 330.60 731.25 330.60 C735.40 330.60 735.40 330.60 739.55 330.60 C743.70 330.60 743.70 330.60 747.85 330.60 C752.00 330.60 752.00 330.60 756.15 330.60 C760.30 330.60 760.30 330.60 764.45 330.60 C768.60 330.60 768.60 330.60 772.75 330.60 C776.90 330.60 776.90 330.60 781.05 330.60 C785.20 330.60 785.20 330.60 789.35 330.60 C793.50 330.60 793.50 330.60 797.65 330.60 C801.80 330.60 801.80 330.60 805.95 330.60 C810.10 330.60 810.10 330.60 814.25 330.60 C818.40 330.60 818.40 330.60 822.55 330.60 C826.70 330.60 826.70 330.60 830.85 330.60 C835.00 330.60 835.00 330.60 839.15 330.60 C843.30 330.60 845.38 330.60 847.45 330.60" fill="none" stroke="#5B8FF9" stroke-width="1.3"/><path d="M166.85 321.53 C168.92 323.04 171.00 325.31 175.15 327.58 C179.30 329.84 179.30 329.84 183.45 330.60 C187.60 330.60 187.60 330.60 191.75 330.60 C195.90 330.60 195.90 330.60 200.05 330.60 C204.20 330.60 204.20 330.60 208.35 330.60 C212.50 330.60 212.50 330.60 216.65 330.60 C220.80 330.60 220.80 330.60 224.95 330.60 C229.10 330.60 229.10 330.60 233.25 330.60 C237.40 330.60 237.40 330.60 241.55 330.60 C245.70 330.60 245.70 330.60 249.85 330.60 C254.00 330.60 254.00 330.60 258.15 330.60 C262.30 330.60 262.30 330.60 266.45 330.60 C270.60 329.84 270.60 328.33 274.75 327.58 C278.90 326.82 278.90 326.82 283.05 327.58 C287.20 328.33 287.20 329.84 291.35 330.60 C295.50 330.60 295.50 330.60 299.65 330.60 C303.80 330.60 303.80 330.60 307.95 330.60 C312.10 330.60 312.10 330.60 316.25 330.60 C320.40 330.60 320.40 330.60 324.55 330.60 C328.70 330.60 328.70 330.60 332.85 330.60 C337.00 329.09 337.00 330.60 341.15 324.55 C345.30 316.99 345.30 302.62 349.45 300.35 C353.60 298.08 353.60 307.91 357.75 315.48 C361.90 323.04 361.90 326.82 366.05 330.60 C370.20 330.60 370.20 330.60 374.35 330.60 C378.50 330.60 378.50 330.60 382.65 330.60 C386.80 330.60 386.80 330.60 390.95 330.60 C395.10 330.60 395.10 330.60 399.25 330.60 C403.40 330.60 403.40 330.60 407.55 330.60 C411.70 330.60 411.70 330.60 415.85 330.60 C420.00 330.60 420.00 330.60 424.15 330.60 C428.30 330.60 428.30 330.60 432.45 330.60 C436.60 330.60 436.60 330.60 440.75 330.60 C444.90 330.60 444.90 330.60 449.05 330.60 C453.20 330.60 453.20 330.60 457.35 330.60 C461.50 330.60 461.50 330.60 465.65 330.60 C469.80 330.60 469.80 330.60 473.95 330.60 C478.10 330.60 478.10 330.60 482.25 330.60 C486.40 330.60 486.40 330.60 490.55 330.60 C494.70 330.60 494.70 330.60 498.85 330.60 C503.00 330.60 503.00 330.60 507.15 330.60 C511.30 330.60 511.30 330.60 515.45 330.60 C519.60 330.60 519.60 330.60 523.75 330.60 C527.90 330.60 527.90 330.60 532.05 330.60 C536.20 330.60 536.20 330.60 540.35 330.60 C544.50 330.60 544.50 330.60 548.65 330.60 C552.80 330.60 552.80 330.60 556.95 330.60 C561.10 330.60 561.10 330.60 565.25 330.60 C569.40 329.84 569.40 327.58 573.55 327.58 C577.70 327.58 577.70 329.84 581.85 330.60 C586.00 330.60 586.00 330.60 590.15 330.60 C594.30 330.60 594.30 330.60 598.45 330.60 C602.60 330.60 602.60 330.60 606.75 330.60 C610.90 330.60 610.90 330.60 615.05 330.60 C619.20 330.60 619.20 330.60 623.35 330.60 C627.50 330.60 627.50 330.60 631.65 330.60 C635.80 330.60 635.80 330.60 639.95 330.60 C644.10 330.60 644.10 330.60 648.25 330.60 C652.40 330.60 652.40 330.60 656.55 330.60 C660.70 330.60 660.70 330.60 664.85 330.60 C669.00 330.60 669.00 330.60 673.15 330.60 C677.30 330.60 677.30 330.60 681.45 330.60 C685.60 330.60 685.60 330.60 689.75 330.60 C693.90 330.60 693.90 330.60 698.05 330.60 C702.20 330.60 702.20 330.60 706.35 330.60 C710.50 330.60 710.50 330.60 714.65 330.60 C718.80 330.60 718.80 330.60 722.95 330.60 C727.10 330.60 727.10 330.60 731.25 330.60 C735.40 330.60 735.40 330.60 739.55 330.60 C743.70 330.60 743.70 330.60 747.85 330.60 C752.00 330.60 752.00 330.60 756.15 330.60 C760.30 330.60 760.30 330.60 764.45 330.60 C768.60 330.60 768.60 330.60 772.75 330.60 C776.90 330.60 776.90 330.60 781.05 330.60 C785.20 330.60 785.20 330.60 789.35 330.60 C793.50 329.09 793.50 329.69 797.65 324.55 C801.80 319.41 801.80 309.27 805.95 310.03 C810.10 310.79 810.10 322.43 814.25 327.58 C818.40 330.60 818.40 329.84 822.55 330.60 C826.70 330.60 826.70 330.60 830.85 330.60 C835.00 330.60 835.00 330.60 839.15 330.60 C843.30 330.60 845.38 330.60 847.45 330.60" fill="none" stroke="#F6BD16" stroke-width="1.3"/><path d="M166.85 279.18 C168.92 286.74 171.00 300.35 175.15 309.43 C179.30 318.50 179.30 314.72 183.45 315.48 C187.60 316.23 187.60 310.94 191.75 312.45 C195.90 313.96 195.90 322.28 200.05 321.53 C204.20 320.77 204.20 307.91 208.35 309.43 C212.50 310.94 212.50 323.04 216.65 327.58 C220.80 330.60 220.80 330.60 224.95 327.58 C229.10 324.55 229.10 314.72 233.25 315.48 C237.40 316.23 237.40 327.58 241.55 330.60 C245.70 330.60 245.70 327.58 249.85 327.58 C254.00 327.58 254.00 329.84 258.15 330.60 C262.30 330.60 262.30 330.60 266.45 330.60 C270.60 329.84 270.60 327.58 274.75 327.58 C278.90 327.58 278.90 329.84 283.05 330.60 C287.20 330.60 287.20 330.60 291.35 330.60 C295.50 329.84 295.50 327.58 299.65 327.58 C303.80 327.58 303.80 329.84 307.95 330.60 C312.10 330.60 312.10 330.60 316.25 330.60 C320.40 330.60 320.40 330.60 324.55 330.60 C328.70 329.84 328.70 327.58 332.85 327.58 C337.00 327.58 337.00 329.84 341.15 330.60 C345.30 330.60 345.30 330.60 349.45 330.60 C353.60 330.60 353.60 330.60 357.75 330.60 C361.90 329.84 361.90 327.58 366.05 327.58 C370.20 327.58 370.20 329.84 374.35 330.60 C378.50 330.60 378.50 330.60 382.65 330.60 C386.80 329.09 386.80 324.55 390.95 324.55 C395.10 324.55 395.10 329.09 399.25 330.60 C403.40 330.60 403.40 330.60 407.55 330.60 C411.70 329.84 411.70 327.58 415.85 327.58 C420.00 327.58 420.00 329.84 424.15 330.60 C428.30 330.60 428.30 330.60 432.45 330.60 C436.60 330.60 436.60 330.60 440.75 330.60 C444.90 329.84 444.90 327.58 449.05 327.58 C453.20 327.58 453.20 329.84 457.35 330.60 C461.50 330.60 461.50 330.60 465.65 330.60 C469.80 330.60 469.80 330.60 473.95 330.60 C478.10 330.60 478.10 330.60 482.25 330.60 C486.40 329.84 486.40 327.58 490.55 327.58 C494.70 327.58 494.70 329.84 498.85 330.60 C503.00 330.60 503.00 330.60 507.15 330.60 C511.30 330.60 511.30 330.60 515.45 330.60 C519.60 330.60 519.60 330.60 523.75 330.60 C527.90 329.84 527.90 327.58 532.05 327.58 C536.20 327.58 536.20 330.60 540.35 330.60 C544.50 330.60 544.50 327.58 548.65 327.58 C552.80 327.58 552.80 330.60 556.95 330.60 C561.10 330.60 561.10 329.84 565.25 327.58 C569.40 325.31 569.40 321.53 573.55 321.53 C577.70 321.53 577.70 326.82 581.85 327.58 C586.00 328.33 586.00 324.55 590.15 324.55 C594.30 324.55 594.30 326.06 598.45 327.58 C602.60 329.09 602.60 330.60 606.75 330.60 C610.90 330.60 610.90 327.58 615.05 327.58 C619.20 327.58 619.20 329.84 623.35 330.60 C627.50 330.60 627.50 330.60 631.65 330.60 C635.80 329.84 635.80 327.58 639.95 327.58 C644.10 327.58 644.10 329.84 648.25 330.60 C652.40 330.60 652.40 330.60 656.55 330.60 C660.70 329.84 660.70 327.58 664.85 327.58 C669.00 327.58 669.00 329.84 673.15 330.60 C677.30 330.60 677.30 330.60 681.45 330.60 C685.60 329.09 685.60 324.55 689.75 324.55 C693.90 324.55 693.90 329.09 698.05 330.60 C702.20 330.60 702.20 330.60 706.35 330.60 C710.50 329.84 710.50 327.58 714.65 327.58 C718.80 327.58 718.80 329.84 722.95 330.60 C727.10 330.60 727.10 330.60 731.25 330.60 C735.40 330.60 735.40 330.60 739.55 330.60 C743.70 330.60 743.70 330.60 747.85 330.60 C752.00 330.60 752.00 330.60 756.15 330.60 C760.30 330.60 760.30 330.60 764.45 330.60 C768.60 330.60 768.60 330.60 772.75 330.60 C776.90 330.60 776.90 330.60 781.05 330.60 C785.20 330.60 785.20 330.60 789.35 330.60 C793.50 329.84 793.50 327.58 797.65 327.58 C801.80 327.58 801.80 330.60 805.95 330.60 C810.10 330.60 810.10 327.58 814.25 327.58 C818.40 327.58 818.40 330.60 822.55 330.60 C826.70 329.84 826.70 325.31 830.85 324.55 C835.00 323.79 835.00 326.82 839.15 327.58 C843.30 328.33 845.38 327.58 847.45 327.58" fill="none" stroke="#5AD8A6" stroke-width="1.3"/><path d="M166.85 327.58 C168.92 327.58 171.00 326.82 175.15 327.58 C179.30 328.33 179.30 330.60 183.45 330.60 C187.60 330.60 187.60 327.58 191.75 327.58 C195.90 327.58 195.90 329.84 200.05 330.60 C204.20 330.60 204.20 330.60 208.35 330.60 C212.50 329.09 212.50 325.31 216.65 324.55 C220.80 323.79 220.80 327.58 224.95 327.58 C229.10 327.58 229.10 324.55 233.25 324.55 C237.40 324.55 237.40 326.82 241.55 327.58 C245.70 328.33 245.70 327.58 249.85 327.58 C254.00 327.58 254.00 326.82 258.15 327.58 C262.30 328.33 262.30 330.60 266.45 330.60 C270.60 330.60 270.60 329.09 274.75 327.58 C278.90 326.06 278.90 324.55 283.05 324.55 C287.20 324.55 287.20 326.06 291.35 327.58 C295.50 329.09 295.50 330.60 299.65 330.60 C303.80 330.60 303.80 327.58 307.95 327.58 C312.10 327.58 312.10 329.84 316.25 330.60 C320.40 330.60 320.40 330.60 324.55 330.60 C328.70 330.60 328.70 330.60 332.85 330.60 C337.00 330.60 337.00 330.60 341.15 330.60 C345.30 330.60 345.30 330.60 349.45 330.60 C353.60 329.84 353.60 327.58 357.75 327.58 C361.90 327.58 361.90 329.84 366.05 330.60 C370.20 330.60 370.20 330.60 374.35 330.60 C378.50 329.09 378.50 328.33 382.65 324.55 C386.80 320.77 386.80 329.39 390.95 315.48 C395.10 301.56 395.10 268.13 399.25 268.89 C403.40 269.65 403.40 311.39 407.55 318.50 C411.70 325.61 411.70 296.57 415.85 297.33 C420.00 298.08 420.00 313.96 424.15 321.53 C428.30 329.09 428.30 325.31 432.45 327.58 C436.60 329.84 436.60 330.60 440.75 330.60 C444.90 330.60 444.90 327.58 449.05 327.58 C453.20 327.58 453.20 329.84 457.35 330.60 C461.50 330.60 461.50 330.60 465.65 330.60 C469.80 329.84 469.80 327.58 473.95 327.58 C478.10 327.58 478.10 329.84 482.25 330.60 C486.40 330.60 486.40 330.60 490.55 330.60 C494.70 329.84 494.70 327.58 498.85 327.58 C503.00 327.58 503.00 329.84 507.15 330.60 C511.30 330.60 511.30 330.60 515.45 330.60 C519.60 329.84 519.60 328.33 523.75 327.58 C527.90 326.82 527.90 326.82 532.05 327.58 C536.20 328.33 536.20 330.60 540.35 330.60 C544.50 330.60 544.50 327.58 548.65 327.58 C552.80 327.58 552.80 329.84 556.95 330.60 C561.10 330.60 561.10 330.60 565.25 330.60 C569.40 329.84 569.40 327.58 573.55 327.58 C577.70 327.58 577.70 330.60 581.85 330.60 C586.00 329.84 586.00 324.55 590.15 324.55 C594.30 324.55 594.30 329.84 598.45 330.60 C602.60 330.60 602.60 327.58 606.75 327.58 C610.90 327.58 610.90 329.84 615.05 330.60 C619.20 330.60 619.20 330.60 623.35 330.60 C627.50 330.60 627.50 330.60 631.65 330.60 C635.80 330.60 635.80 330.60 639.95 330.60 C644.10 330.60 644.10 330.60 648.25 330.60 C652.40 329.84 652.40 327.58 656.55 327.58 C660.70 327.58 660.70 329.84 664.85 330.60 C669.00 330.60 669.00 330.60 673.15 330.60 C677.30 330.60 677.30 330.60 681.45 330.60 C685.60 329.84 685.60 327.58 689.75 327.58 C693.90 327.58 693.90 329.84 698.05 330.60 C702.20 330.60 702.20 330.60 706.35 330.60 C710.50 329.84 710.50 327.58 714.65 327.58 C718.80 327.58 718.80 329.84 722.95 330.60 C727.10 330.60 727.10 330.60 731.25 330.60 C735.40 330.60 735.40 330.60 739.55 330.60 C743.70 330.60 743.70 330.60 747.85 330.60 C752.00 330.60 752.00 330.60 756.15 330.60 C760.30 330.60 760.30 330.60 764.45 330.60 C768.60 330.60 768.60 330.60 772.75 330.60 C776.90 330.60 776.90 330.60 781.05 330.60 C785.20 330.60 785.20 330.60 789.35 330.60 C793.50 330.60 793.50 330.60 797.65 330.60 C801.80 329.84 801.80 327.58 805.95 327.58 C810.10 327.58 810.10 330.60 814.25 330.60 C818.40 330.60 818.40 328.33 822.55 327.58 C826.70 326.82 826.70 327.58 830.85 327.58 C835.00 327.58 835.00 327.58 839.15 327.58 C843.30 327.58 845.38 327.58 847.45 327.58" fill="none" stroke="#5D7092" stroke-width="1.3"/><path d="M166.85 303.38 C168.92 308.67 171.00 317.74 175.15 324.55 C179.30 330.60 179.30 330.60 183.45 330.60 C187.60 329.09 187.60 320.77 191.75 318.50 C195.90 316.23 195.90 319.26 200.05 321.53 C204.20 323.79 204.20 325.31 208.35 327.58 C212.50 329.84 212.50 330.60 216.65 330.60 C220.80 330.60 220.80 329.09 224.95 327.58 C229.10 326.06 229.10 324.55 233.25 324.55 C237.40 324.55 237.40 326.06 241.55 327.58 C245.70 329.09 245.70 329.84 249.85 330.60 C254.00 330.60 254.00 330.60 258.15 330.60 C262.30 329.84 262.30 327.58 266.45 327.58 C270.60 327.58 270.60 330.60 274.75 330.60 C278.90 330.60 278.90 327.58 283.05 327.58 C287.20 327.58 287.20 330.60 291.35 330.60 C295.50 330.60 295.50 327.58 299.65 327.58 C303.80 327.58 303.80 330.60 307.95 330.60 C312.10 330.60 312.10 327.58 316.25 327.58 C320.40 327.58 320.40 329.84 324.55 330.60 C328.70 330.60 328.70 330.60 332.85 330.60 C337.00 330.60 337.00 330.60 341.15 330.60 C345.30 329.84 345.30 327.58 349.45 327.58 C353.60 327.58 353.60 330.60 357.75 330.60 C361.90 330.60 361.90 327.58 366.05 327.58 C370.20 327.58 370.20 330.60 374.35 330.60 C378.50 330.60 378.50 329.84 382.65 327.58 C386.80 325.31 386.80 320.77 390.95 321.53 C395.10 322.28 395.10 329.09 399.25 330.60 C403.40 330.60 403.40 327.58 407.55 327.58 C411.70 327.58 411.70 329.84 415.85 330.60 C420.00 330.60 420.00 330.60 424.15 330.60 C428.30 329.84 428.30 327.58 432.45 327.58 C436.60 327.58 436.60 330.60 440.75 330.60 C444.90 329.09 444.90 321.53 449.05 321.53 C453.20 321.53 453.20 329.09 457.35 330.60 C461.50 330.60 461.50 327.58 465.65 327.58 C469.80 327.58 469.80 330.60 473.95 330.60 C478.10 330.60 478.10 327.58 482.25 327.58 C486.40 327.58 486.40 329.84 490.55 330.60 C494.70 330.60 494.70 330.60 498.85 330.60 C503.00 329.84 503.00 327.58 507.15 327.58 C511.30 327.58 511.30 330.60 515.45 330.60 C519.60 330.60 519.60 328.33 523.75 327.58 C527.90 326.82 527.90 326.82 532.05 327.58 C536.20 328.33 536.20 330.60 540.35 330.60 C544.50 329.84 544.50 324.55 548.65 324.55 C552.80 324.55 552.80 329.84 556.95 330.60 C561.10 330.60 561.10 329.84 565.25 327.58 C569.40 325.31 569.40 323.79 573.55 321.53 C577.70 319.26 577.70 327.57 581.85 318.50 C586.00 309.43 586.00 284.47 590.15 285.23 C594.30 285.98 594.30 310.94 598.45 321.53 C602.60 330.60 602.60 325.31 606.75 327.58 C610.90 329.84 610.90 330.60 615.05 330.60 C619.20 330.60 619.20 327.58 623.35 327.58 C627.50 327.58 627.50 330.60 631.65 330.60 C635.80 329.84 635.80 325.31 639.95 324.55 C644.10 323.79 644.10 326.06 648.25 327.58 C652.40 329.09 652.40 330.60 656.55 330.60 C660.70 330.60 660.70 329.09 664.85 327.58 C669.00 326.06 669.00 324.55 673.15 324.55 C677.30 324.55 677.30 327.58 681.45 327.58 C685.60 327.58 685.60 324.55 689.75 324.55 C693.90 324.55 693.90 327.58 698.05 327.58 C702.20 327.58 702.20 326.82 706.35 324.55 C710.50 322.28 710.50 317.74 714.65 318.50 C718.80 319.26 718.80 324.55 722.95 327.58 C727.10 330.60 727.10 330.60 731.25 330.60 C735.40 330.60 735.40 327.58 739.55 327.58 C743.70 327.58 743.70 330.60 747.85 330.60 C752.00 330.60 752.00 327.58 756.15 327.58 C760.30 327.58 760.30 329.84 764.45 330.60 C768.60 330.60 768.60 330.60 772.75 330.60 C776.90 329.84 776.90 327.58 781.05 327.58 C785.20 327.58 785.20 330.60 789.35 330.60 C793.50 330.60 793.50 327.58 797.65 327.58 C801.80 327.58 801.80 330.60 805.95 330.60 C810.10 330.60 810.10 327.58 814.25 327.58 C818.40 327.58 818.40 330.60 822.55 330.60 C826.70 330.60 826.70 329.09 830.85 327.58 C835.00 326.06 835.00 326.82 839.15 324.55 C843.30 322.28 845.38 320.01 847.45 318.50" fill="none" stroke="#6F5EF9" stroke-width="1.3"/><path d="M166.85 285.23 C168.92 294.30 171.00 310.94 175.15 321.53 C179.30 330.60 179.30 329.09 183.45 327.58 C187.60 326.06 187.60 317.74 191.75 315.48 C195.90 313.21 195.90 315.48 200.05 318.50 C204.20 321.52 204.20 325.31 208.35 327.58 C212.50 329.84 212.50 330.60 216.65 327.58 C220.80 323.79 220.80 316.99 224.95 312.45 C229.10 307.91 229.10 310.18 233.25 309.43 C237.40 308.67 237.40 306.40 241.55 309.43 C245.70 312.45 245.70 316.99 249.85 321.53 C254.00 326.06 254.00 325.31 258.15 327.58 C262.30 329.84 262.30 330.60 266.45 330.60 C270.60 329.84 270.60 327.58 274.75 324.55 C278.90 321.52 278.90 317.74 283.05 318.50 C287.20 319.26 287.20 326.06 291.35 327.58 C295.50 329.09 295.50 324.55 299.65 324.55 C303.80 324.55 303.80 326.06 307.95 327.58 C312.10 329.09 312.10 329.84 316.25 330.60 C320.40 330.60 320.40 330.60 324.55 330.60 C328.70 330.60 328.70 330.60 332.85 330.60 C337.00 329.84 337.00 327.58 341.15 327.58 C345.30 327.58 345.30 330.60 349.45 330.60 C353.60 330.60 353.60 327.58 357.75 327.58 C361.90 327.58 361.90 330.60 366.05 330.60 C370.20 330.60 370.20 327.58 374.35 327.58 C378.50 327.58 378.50 330.60 382.65 330.60 C386.80 329.84 386.80 325.31 390.95 324.55 C395.10 323.79 395.10 326.06 399.25 327.58 C403.40 329.09 403.40 330.60 407.55 330.60 C411.70 330.60 411.70 329.09 415.85 327.58 C420.00 326.06 420.00 323.79 424.15 324.55 C428.30 325.31 428.30 329.09 432.45 330.60 C436.60 330.60 436.60 330.60 440.75 330.60 C444.90 328.33 444.90 321.53 449.05 321.53 C453.20 321.53 453.20 328.33 457.35 330.60 C461.50 330.60 461.50 330.60 465.65 330.60 C469.80 330.60 469.80 330.60 473.95 330.60 C478.10 329.84 478.10 327.58 482.25 327.58 C486.40 327.58 486.40 329.84 490.55 330.60 C494.70 330.60 494.70 330.60 498.85 330.60 C503.00 329.84 503.00 329.09 507.15 327.58 C511.30 326.06 511.30 323.79 515.45 324.55 C519.60 325.31 519.60 329.84 523.75 330.60 C527.90 330.60 527.90 327.58 532.05 327.58 C536.20 327.58 536.20 329.84 540.35 330.60 C544.50 330.60 544.50 330.60 548.65 330.60 C552.80 329.84 552.80 327.58 556.95 327.58 C561.10 327.58 561.10 330.60 565.25 330.60 C569.40 329.84 569.40 325.31 573.55 324.55 C577.70 323.79 577.70 327.58 581.85 327.58 C586.00 327.58 586.00 325.31 590.15 324.55 C594.30 323.79 594.30 326.82 598.45 324.55 C602.60 322.28 602.60 313.96 606.75 315.48 C610.90 316.99 610.90 327.58 615.05 330.60 C619.20 330.60 619.20 327.58 623.35 327.58 C627.50 327.58 627.50 330.60 631.65 330.60 C635.80 330.60 635.80 330.60 639.95 327.58 C644.10 323.79 644.10 315.48 648.25 315.48 C652.40 315.48 652.40 326.06 656.55 327.58 C660.70 329.09 660.70 320.77 664.85 321.53 C669.00 322.28 669.00 329.09 673.15 330.60 C677.30 330.60 677.30 329.09 681.45 327.58 C685.60 326.06 685.60 323.79 689.75 324.55 C693.90 325.31 693.90 329.84 698.05 330.60 C702.20 330.60 702.20 330.60 706.35 327.58 C710.50 323.04 710.50 312.45 714.65 312.45 C718.80 312.45 718.80 323.04 722.95 327.58 C727.10 330.60 727.10 329.84 731.25 330.60 C735.40 330.60 735.40 330.60 739.55 330.60 C743.70 330.60 743.70 330.60 747.85 330.60 C752.00 329.84 752.00 327.58 756.15 327.58 C760.30 327.58 760.30 330.60 764.45 330.60 C768.60 330.60 768.60 327.58 772.75 327.58 C776.90 327.58 776.90 329.84 781.05 330.60 C785.20 330.60 785.20 330.60 789.35 330.60 C793.50 329.84 793.50 329.84 797.65 327.58 C801.80 325.31 801.80 321.53 805.95 321.53 C810.10 321.53 810.10 325.31 814.25 327.58 C818.40 329.84 818.40 330.60 822.55 330.60 C826.70 329.84 826.70 325.31 830.85 324.55 C835.00 323.79 835.00 328.33 839.15 327.58 C843.30 326.82 845.38 323.04 847.45 321.53" fill="none" stroke="#945FB9" stroke-width="1.3"/><path d="M166.85 330.60 C168.92 330.60 171.00 330.60 175.15 330.60 C179.30 330.60 179.30 330.60 183.45 330.60 C187.60 329.84 187.60 327.58 191.75 327.58 C195.90 327.58 195.90 329.84 200.05 330.60 C204.20 330.60 204.20 330.60 208.35 330.60 C212.50 329.84 212.50 329.84 216.65 327.58 C220.80 325.31 220.80 321.53 224.95 321.53 C229.10 321.53 229.10 326.82 233.25 327.58 C237.40 328.33 237.40 323.79 241.55 324.55 C245.70 325.31 245.70 329.09 249.85 330.60 C254.00 330.60 254.00 330.60 258.15 330.60 C262.30 330.60 262.30 330.60 266.45 330.60 C270.60 330.60 270.60 330.60 274.75 330.60 C278.90 329.84 278.90 327.58 283.05 327.58 C287.20 327.58 287.20 329.84 291.35 330.60 C295.50 330.60 295.50 330.60 299.65 330.60 C303.80 330.60 303.80 330.60 307.95 330.60 C312.10 330.60 312.10 330.60 316.25 330.60 C320.40 330.60 320.40 330.60 324.55 330.60 C328.70 330.60 328.70 330.60 332.85 330.60 C337.00 330.60 337.00 330.60 341.15 330.60 C345.30 330.60 345.30 330.60 349.45 330.60 C353.60 330.60 353.60 330.60 357.75 330.60 C361.90 329.84 361.90 329.09 366.05 327.58 C370.20 326.06 370.20 327.58 374.35 324.55 C378.50 321.52 378.50 313.96 382.65 315.48 C386.80 316.99 386.80 327.58 390.95 330.60 C395.10 330.60 395.10 327.58 399.25 327.58 C403.40 327.58 403.40 329.84 407.55 330.60 C411.70 330.60 411.70 330.60 415.85 330.60 C420.00 330.60 420.00 330.60 424.15 330.60 C428.30 330.60 428.30 330.60 432.45 330.60 C436.60 329.84 436.60 327.58 440.75 327.58 C444.90 327.58 444.90 329.84 449.05 330.60 C453.20 330.60 453.20 330.60 457.35 330.60 C461.50 330.60 461.50 330.60 465.65 330.60 C469.80 329.84 469.80 327.58 473.95 327.58 C478.10 327.58 478.10 329.84 482.25 330.60 C486.40 330.60 486.40 330.60 490.55 330.60 C494.70 330.60 494.70 330.60 498.85 330.60 C503.00 328.33 503.00 330.60 507.15 321.53 C511.30 312.45 511.30 295.06 515.45 294.30 C519.60 293.54 519.60 314.72 523.75 318.50 C527.90 322.28 527.90 307.91 532.05 309.43 C536.20 310.94 536.20 321.52 540.35 324.55 C544.50 327.58 544.50 320.01 548.65 321.53 C552.80 323.04 552.80 329.09 556.95 330.60 C561.10 330.60 561.10 329.09 565.25 327.58 C569.40 326.06 569.40 326.82 573.55 324.55 C577.70 322.28 577.70 323.04 581.85 318.50 C586.00 313.96 586.00 310.56 590.15 306.40 C594.30 302.24 594.30 303.00 598.45 301.86 C602.60 300.73 602.60 300.73 606.75 301.86 C610.90 303.00 610.90 304.51 615.05 306.40 C619.20 308.29 619.20 307.91 623.35 309.43 C627.50 310.94 627.50 311.69 631.65 312.45 C635.80 313.21 635.80 311.69 639.95 312.45 C644.10 313.21 644.10 318.12 648.25 315.48 C652.40 312.83 652.40 304.13 656.55 301.86 C660.70 299.59 660.70 301.48 664.85 306.40 C669.00 311.32 669.00 321.75 673.15 321.53 C677.30 321.30 677.30 308.90 681.45 305.49 C685.60 302.09 685.60 306.93 689.75 307.91 C693.90 308.90 693.90 306.78 698.05 309.43 C702.20 312.07 702.20 320.01 706.35 318.50 C710.50 316.99 710.50 302.62 714.65 303.38 C718.80 304.13 718.80 315.48 722.95 321.53 C727.10 327.58 727.10 325.31 731.25 327.58 C735.40 329.84 735.40 330.60 739.55 330.60 C743.70 330.60 743.70 328.33 747.85 327.58 C752.00 326.82 752.00 326.82 756.15 327.58 C760.30 328.33 760.30 329.84 764.45 330.60 C768.60 330.60 768.60 330.60 772.75 330.60 C776.90 329.84 776.90 327.58 781.05 327.58 C785.20 327.58 785.20 330.60 789.35 330.60 C793.50 330.60 793.50 329.09 797.65 327.58 C801.80 326.06 801.80 324.55 805.95 324.55 C810.10 324.55 810.10 327.58 814.25 327.58 C818.40 327.58 818.40 327.05 822.55 324.55 C826.70 322.05 826.70 319.11 830.85 317.59 C835.00 316.08 835.00 316.76 839.15 318.50 C843.30 320.24 845.38 323.04 847.45 324.55" fill="none" stroke="#FF99C3" stroke-width="1.3"/><path d="M166.85 303.38 C168.92 308.67 171.00 324.55 175.15 324.55 C179.30 324.55 179.30 306.40 183.45 303.38 C187.60 300.35 187.60 308.67 191.75 312.45 C195.90 316.23 195.90 316.23 200.05 318.50 C204.20 320.77 204.20 325.31 208.35 321.53 C212.50 317.74 212.50 303.38 216.65 303.38 C220.80 303.38 220.80 315.48 224.95 321.53 C229.10 327.58 229.10 325.31 233.25 327.58 C237.40 329.84 237.40 330.60 241.55 330.60 C245.70 329.84 245.70 327.58 249.85 324.55 C254.00 321.52 254.00 320.77 258.15 318.50 C262.30 316.23 262.30 313.21 266.45 315.48 C270.60 317.74 270.60 325.31 274.75 327.58 C278.90 329.84 278.90 326.06 283.05 324.55 C287.20 323.04 287.20 324.55 291.35 321.53 C295.50 318.50 295.50 312.45 299.65 312.45 C303.80 312.45 303.80 317.74 307.95 321.53 C312.10 325.31 312.10 325.31 316.25 327.58 C320.40 329.84 320.40 329.84 324.55 330.60 C328.70 330.60 328.70 330.60 332.85 330.60 C337.00 329.84 337.00 329.09 341.15 327.58 C345.30 326.06 345.30 330.60 349.45 324.55 C353.60 316.23 353.60 301.86 357.75 294.30 C361.90 286.74 361.90 287.49 366.05 294.30 C370.20 301.11 370.20 313.21 374.35 321.53 C378.50 329.84 378.50 326.06 382.65 327.58 C386.80 329.09 386.80 328.33 390.95 327.58 C395.10 326.82 395.10 326.82 399.25 324.55 C403.40 322.28 403.40 319.26 407.55 318.50 C411.70 317.74 411.70 319.26 415.85 321.53 C420.00 323.79 420.00 326.82 424.15 327.58 C428.30 328.33 428.30 324.55 432.45 324.55 C436.60 324.55 436.60 326.06 440.75 327.58 C444.90 329.09 444.90 329.84 449.05 330.60 C453.20 330.60 453.20 330.60 457.35 330.60 C461.50 329.09 461.50 325.31 465.65 324.55 C469.80 323.79 469.80 328.33 473.95 327.58 C478.10 326.82 478.10 321.53 482.25 321.53 C486.40 321.53 486.40 325.31 490.55 327.58 C494.70 329.84 494.70 330.60 498.85 330.60 C503.00 329.84 503.00 326.82 507.15 324.55 C511.30 322.28 511.30 323.79 515.45 321.53 C519.60 319.26 519.60 325.31 523.75 315.48 C527.90 305.64 527.90 282.96 532.05 282.20 C536.20 281.44 536.20 316.23 540.35 312.45 C544.50 308.67 544.50 264.81 548.65 267.08 C552.80 269.34 552.80 306.40 556.95 321.53 C561.10 330.60 561.10 326.82 565.25 327.58 C569.40 328.33 569.40 326.82 573.55 324.55 C577.70 322.28 577.70 318.50 581.85 318.50 C586.00 318.50 586.00 323.79 590.15 324.55 C594.30 325.31 594.30 320.77 598.45 321.53 C602.60 322.28 602.60 328.33 606.75 327.58 C610.90 326.82 610.90 319.26 615.05 318.50 C619.20 317.74 619.20 322.28 623.35 324.55 C627.50 326.82 627.50 326.06 631.65 327.58 C635.80 329.09 635.80 330.60 639.95 330.60 C644.10 330.60 644.10 330.60 648.25 327.58 C652.40 323.04 652.40 313.21 656.55 312.45 C660.70 311.69 660.70 322.28 664.85 324.55 C669.00 326.82 669.00 321.53 673.15 321.53 C677.30 321.53 677.30 326.82 681.45 324.55 C685.60 322.28 685.60 313.21 689.75 312.45 C693.90 311.69 693.90 321.53 698.05 321.53 C702.20 321.53 702.20 313.96 706.35 312.45 C710.50 310.94 710.50 312.45 714.65 315.48 C718.80 318.50 718.80 321.52 722.95 324.55 C727.10 327.58 727.10 330.60 731.25 327.58 C735.40 322.28 735.40 304.13 739.55 303.38 C743.70 302.62 743.70 317.74 747.85 324.55 C752.00 330.60 752.00 329.84 756.15 330.60 C760.30 330.60 760.30 330.60 764.45 327.58 C768.60 324.55 768.60 318.50 772.75 318.50 C776.90 318.50 776.90 324.55 781.05 327.58 C785.20 330.60 785.20 330.60 789.35 330.60 C793.50 329.09 793.50 323.04 797.65 321.53 C801.80 320.01 801.80 323.04 805.95 324.55 C810.10 326.06 810.10 327.58 814.25 327.58 C818.40 327.58 818.40 326.06 822.55 324.55 C826.70 323.04 826.70 323.04 830.85 321.53 C835.00 320.01 835.00 320.77 839.15 318.50 C843.30 316.23 845.38 313.96 847.45 312.45" fill="none" stroke="#5B8FF9" stroke-width="1.3"/><path d="M166.85 327.58 C168.92 327.58 171.00 326.82 175.15 327.58 C179.30 328.33 179.30 330.60 183.45 330.60 C187.60 327.27 187.60 314.27 191.75 314.27 C195.90 314.27 195.90 326.89 200.05 330.60 C204.20 330.60 204.20 329.84 208.35 329.09 C212.50 328.33 212.50 327.20 216.65 327.58 C220.80 327.95 220.80 330.60 224.95 330.60 C229.10 329.84 229.10 328.33 233.25 324.55 C237.40 320.77 237.40 314.72 241.55 315.48 C245.70 316.23 245.70 323.79 249.85 327.58 C254.00 330.60 254.00 330.60 258.15 330.60 C262.30 330.60 262.30 328.71 266.45 327.58 C270.60 326.44 270.60 330.60 274.75 326.06 C278.90 321.52 278.90 310.56 283.05 309.43 C287.20 308.29 287.20 317.74 291.35 321.53 C295.50 325.31 295.50 323.04 299.65 324.55 C303.80 326.06 303.80 329.09 307.95 327.58 C312.10 326.06 312.10 317.74 316.25 318.50 C320.40 319.26 320.40 327.58 324.55 330.60 C328.70 330.60 328.70 330.60 332.85 330.60 C337.00 329.84 337.00 327.58 341.15 327.58 C345.30 327.58 345.30 330.60 349.45 330.60 C353.60 329.84 353.60 326.82 357.75 324.55 C361.90 322.28 361.90 325.31 366.05 321.53 C370.20 317.74 370.20 307.91 374.35 309.43 C378.50 310.94 378.50 326.82 382.65 327.58 C386.80 328.33 386.80 313.96 390.95 312.45 C395.10 310.94 395.10 319.26 399.25 321.53 C403.40 323.79 403.40 320.01 407.55 321.53 C411.70 323.04 411.70 325.31 415.85 327.58 C420.00 329.84 420.00 330.60 424.15 330.60 C428.30 330.60 428.30 327.58 432.45 327.58 C436.60 327.58 436.60 329.84 440.75 330.60 C444.90 330.60 444.90 330.60 449.05 330.60 C453.20 330.60 453.20 330.60 457.35 330.60 C461.50 330.60 461.50 330.60 465.65 330.60 C469.80 329.84 469.80 329.09 473.95 327.58 C478.10 326.06 478.10 326.82 482.25 324.55 C486.40 322.28 486.40 317.74 490.55 318.50 C494.70 319.26 494.70 324.55 498.85 327.58 C503.00 330.60 503.00 330.60 507.15 330.60 C511.30 330.60 511.30 327.58 515.45 327.58 C519.60 327.58 519.60 330.60 523.75 330.60 C527.90 324.55 527.90 303.38 532.05 303.38 C536.20 303.38 536.20 327.95 540.35 330.60 C544.50 330.60 544.50 313.96 548.65 313.96 C552.80 313.96 552.80 327.20 556.95 330.60 C561.10 330.60 561.10 330.60 565.25 327.58 C569.40 321.90 569.40 307.91 573.55 307.91 C577.70 307.91 577.70 327.95 581.85 327.58 C586.00 327.20 586.00 306.40 590.15 306.40 C594.30 306.40 594.30 321.53 598.45 327.58 C602.60 330.60 602.60 330.60 606.75 330.60 C610.90 329.84 610.90 324.55 615.05 324.55 C619.20 324.55 619.20 329.09 623.35 330.60 C627.50 330.60 627.50 330.60 631.65 330.60 C635.80 329.84 635.80 329.09 639.95 327.58 C644.10 326.06 644.10 323.79 648.25 324.55 C652.40 325.31 652.40 330.60 656.55 330.60 C660.70 329.09 660.70 319.26 664.85 318.50 C669.00 317.74 669.00 324.55 673.15 327.58 C677.30 330.60 677.30 330.60 681.45 330.60 C685.60 327.58 685.60 316.99 689.75 315.48 C693.90 313.96 693.90 320.77 698.05 324.55 C702.20 328.33 702.20 330.60 706.35 330.60 C710.50 324.55 710.50 301.11 714.65 300.35 C718.80 299.59 718.80 320.01 722.95 327.58 C727.10 330.60 727.10 329.84 731.25 330.60 C735.40 330.60 735.40 330.60 739.55 330.60 C743.70 328.33 743.70 321.53 747.85 321.53 C752.00 321.53 752.00 328.33 756.15 330.60 C760.30 330.60 760.30 330.60 764.45 330.60 C768.60 330.60 768.60 330.60 772.75 330.60 C776.90 330.60 776.90 330.60 781.05 330.60 C785.20 329.84 785.20 330.60 789.35 327.58 C793.50 319.26 793.50 298.84 797.65 297.33 C801.80 295.81 801.80 315.48 805.95 321.53 C810.10 327.58 810.10 320.01 814.25 321.53 C818.40 323.04 818.40 328.33 822.55 327.58 C826.70 326.82 826.70 319.26 830.85 318.50 C835.00 317.74 835.00 326.82 839.15 324.55 C843.30 322.28 845.38 313.21 847.45 309.43" fill="none" stroke="#1E9493" stroke-width="1.4"/><path d="M166.85 248.02 C168.92 258.83 171.00 276.68 175.15 291.28 C179.30 305.87 179.30 302.62 183.45 306.40 C187.60 310.18 187.60 307.16 191.75 306.40 C195.90 305.64 195.90 298.84 200.05 303.38 C204.20 307.91 204.20 323.04 208.35 324.55 C212.50 326.06 212.50 310.94 216.65 309.43 C220.80 307.91 220.80 313.96 224.95 318.50 C229.10 323.04 229.10 325.68 233.25 327.58 C237.40 329.47 237.40 327.57 241.55 326.06 C245.70 324.55 245.70 321.53 249.85 321.53 C254.00 321.53 254.00 324.17 258.15 326.06 C262.30 327.95 262.30 330.60 266.45 329.09 C270.60 324.17 270.60 307.53 274.75 306.40 C278.90 305.27 278.90 321.53 283.05 324.55 C287.20 327.57 287.20 319.26 291.35 318.50 C295.50 317.74 295.50 320.77 299.65 321.53 C303.80 322.28 303.80 320.77 307.95 321.53 C312.10 322.28 312.10 322.28 316.25 324.55 C320.40 326.82 320.40 330.22 324.55 330.60 C328.70 330.60 328.70 328.71 332.85 326.06 C337.00 323.42 337.00 325.68 341.15 320.01 C345.30 314.34 345.30 302.24 349.45 303.38 C353.60 304.51 353.60 317.74 357.75 324.55 C361.90 330.60 361.90 329.09 366.05 330.60 C370.20 330.60 370.20 330.60 374.35 330.60 C378.50 329.84 378.50 330.60 382.65 327.58 C386.80 322.28 386.80 313.21 390.95 309.43 C395.10 305.64 395.10 308.67 399.25 312.45 C403.40 316.23 403.40 324.55 407.55 324.55 C411.70 324.55 411.70 311.69 415.85 312.45 C420.00 313.21 420.00 330.60 424.15 327.58 C428.30 307.53 428.30 236.07 432.45 232.29 C436.60 228.51 436.60 290.90 440.75 312.45 C444.90 330.60 444.90 313.96 449.05 318.50 C453.20 323.04 453.20 330.60 457.35 330.60 C461.50 328.71 461.50 315.48 465.65 310.94 C469.80 306.40 469.80 311.62 473.95 312.45 C478.10 313.28 478.10 310.48 482.25 314.27 C486.40 318.05 486.40 329.54 490.55 327.58 C494.70 325.61 494.70 305.64 498.85 306.40 C503.00 307.16 503.00 325.31 507.15 330.60 C511.30 330.60 511.30 327.58 515.45 327.58 C519.60 327.58 519.60 329.84 523.75 330.60 C527.90 330.60 527.90 330.60 532.05 330.60 C536.20 330.60 536.20 330.60 540.35 330.60 C544.50 287.72 544.50 159.08 548.65 159.08 C552.80 159.08 552.80 289.23 556.95 330.60 C561.10 330.60 561.10 330.60 565.25 324.55 C569.40 318.50 569.40 309.43 573.55 306.40 C577.70 303.38 577.70 310.94 581.85 312.45 C586.00 313.96 586.00 313.21 590.15 312.45 C594.30 311.69 594.30 307.91 598.45 309.43 C602.60 310.94 602.60 313.96 606.75 318.50 C610.90 323.04 610.90 324.55 615.05 327.58 C619.20 330.60 619.20 329.84 623.35 330.60 C627.50 330.60 627.50 330.60 631.65 330.60 C635.80 329.84 635.80 329.09 639.95 327.58 C644.10 326.06 644.10 323.79 648.25 324.55 C652.40 325.31 652.40 330.60 656.55 330.60 C660.70 329.84 660.70 325.31 664.85 321.53 C669.00 317.74 669.00 326.82 673.15 315.48 C677.30 304.13 677.30 281.44 681.45 276.15 C685.60 270.86 685.60 285.23 689.75 294.30 C693.90 303.38 693.90 304.89 698.05 312.45 C702.20 320.01 702.20 330.60 706.35 324.55 C710.50 313.96 710.50 270.10 714.65 270.10 C718.80 270.10 718.80 312.98 722.95 324.55 C727.10 330.60 727.10 319.03 731.25 316.38 C735.40 313.74 735.40 315.32 739.55 313.96 C743.70 312.60 743.70 306.78 747.85 310.94 C752.00 315.10 752.00 325.68 756.15 330.60 C760.30 330.60 760.30 330.60 764.45 330.60 C768.60 329.84 768.60 330.60 772.75 327.58 C776.90 323.04 776.90 311.69 781.05 312.45 C785.20 313.21 785.20 330.60 789.35 330.60 C793.50 328.33 793.50 307.16 797.65 303.38 C801.80 299.59 801.80 314.72 805.95 315.48 C810.10 316.23 810.10 311.32 814.25 306.40 C818.40 301.48 818.40 301.11 822.55 295.81 C826.70 290.52 826.70 291.96 830.85 285.23 C835.00 278.49 835.00 263.45 839.15 268.89 C843.30 274.34 845.38 297.48 847.45 307.00" fill="none" stroke="#FF9845" stroke-width="1.3"/><path d="M166.85 199.01 C168.92 206.05 171.00 220.41 175.15 227.15 C179.30 233.88 179.30 221.25 183.45 225.94 C187.60 230.62 187.60 221.25 191.75 245.90 C195.90 270.55 195.90 304.51 200.05 324.55 C204.20 330.60 204.20 330.60 208.35 326.06 C212.50 315.48 212.50 293.54 216.65 282.20 C220.80 270.86 220.80 289.23 224.95 280.69 C229.10 272.14 229.10 250.66 233.25 248.02 C237.40 245.37 237.40 263.07 241.55 270.10 C245.70 277.13 245.70 264.05 249.85 276.15 C254.00 288.25 254.00 308.37 258.15 318.50 C262.30 328.63 262.30 317.44 266.45 316.69 C270.60 315.93 270.60 315.17 274.75 315.48 C278.90 315.78 278.90 318.65 283.05 317.90 C287.20 317.14 287.20 326.14 291.35 312.45 C295.50 298.76 295.50 262.39 299.65 263.14 C303.80 263.90 303.80 306.17 307.95 315.48 C312.10 324.78 312.10 297.70 316.25 300.35 C320.40 303.00 320.40 318.50 324.55 326.06 C328.70 330.60 328.70 330.60 332.85 330.60 C337.00 330.22 337.00 329.84 341.15 324.55 C345.30 319.26 345.30 315.48 349.45 309.43 C353.60 303.38 353.60 299.59 357.75 300.35 C361.90 301.11 361.90 320.92 366.05 312.45 C370.20 303.98 370.20 263.45 374.35 266.47 C378.50 269.50 378.50 310.79 382.65 324.55 C386.80 330.60 386.80 320.77 390.95 321.53 C395.10 322.28 395.10 326.82 399.25 327.58 C403.40 328.33 403.40 324.55 407.55 324.55 C411.70 324.55 411.70 329.84 415.85 327.58 C420.00 325.31 420.00 325.31 424.15 315.48 C428.30 305.64 428.30 286.74 432.45 288.25 C436.60 289.76 436.60 311.69 440.75 321.53 C444.90 330.60 444.90 325.68 449.05 327.58 C453.20 329.47 453.20 329.09 457.35 329.09 C461.50 329.09 461.50 328.71 465.65 327.58 C469.80 326.44 469.80 327.58 473.95 324.55 C478.10 321.52 478.10 315.48 482.25 315.48 C486.40 315.48 486.40 321.52 490.55 324.55 C494.70 327.58 494.70 329.09 498.85 327.58 C503.00 326.06 503.00 329.84 507.15 318.50 C511.30 307.16 511.30 296.95 515.45 282.20 C519.60 267.45 519.60 255.73 523.75 259.51 C527.90 263.29 527.90 295.43 532.05 297.33 C536.20 299.22 536.20 268.59 540.35 267.08 C544.50 265.56 544.50 276.15 548.65 291.28 C552.80 306.40 552.80 319.26 556.95 327.58 C561.10 330.60 561.10 330.60 565.25 324.55 C569.40 316.99 569.40 304.13 573.55 297.33 C577.70 290.52 577.70 298.08 581.85 297.33 C586.00 296.57 586.00 304.51 590.15 294.30 C594.30 284.09 594.30 266.32 598.45 256.49 C602.60 246.66 602.60 240.61 606.75 254.98 C610.90 269.34 610.90 301.11 615.05 313.96 C619.20 326.82 619.20 315.10 623.35 306.40 C627.50 297.70 627.50 285.23 631.65 279.18 C635.80 273.12 635.80 283.71 639.95 282.20 C644.10 280.69 644.10 273.88 648.25 273.12 C652.40 272.37 652.40 279.18 656.55 279.18 C660.70 279.18 660.70 261.78 664.85 273.12 C669.00 284.47 669.00 330.60 673.15 324.55 C677.30 317.74 677.30 252.48 681.45 245.90 C685.60 239.32 685.60 283.86 689.75 298.23 C693.90 312.60 693.90 299.82 698.05 303.38 C702.20 306.93 702.20 324.02 706.35 312.45 C710.50 300.88 710.50 261.18 714.65 257.09 C718.80 253.01 718.80 283.64 722.95 296.12 C727.10 308.59 727.10 300.65 731.25 307.00 C735.40 313.36 735.40 316.38 739.55 321.53 C743.70 326.67 743.70 330.60 747.85 327.58 C752.00 322.28 752.00 302.62 756.15 300.35 C760.30 298.08 760.30 320.01 764.45 318.50 C768.60 316.99 768.60 295.06 772.75 294.30 C776.90 293.54 776.90 308.67 781.05 315.48 C785.20 322.28 785.20 327.58 789.35 321.53 C793.50 315.48 793.50 301.48 797.65 291.28 C801.80 281.07 801.80 279.93 805.95 280.69 C810.10 281.44 810.10 288.63 814.25 294.30 C818.40 299.97 818.40 308.67 822.55 303.38 C826.70 298.08 826.70 282.20 830.85 273.12 C835.00 264.05 835.00 253.84 839.15 267.08 C843.30 280.31 845.38 311.32 847.45 326.06" fill="none" stroke="#6DC8EC" stroke-width="1.3"/><path d="M162.7 149.10000000000002 V330.6" stroke="#9a9a9a" stroke-width="1.1"/><path d="M162.7 330.6 H851.6" stroke="#5B8FF9" stroke-width="1.1"/></svg>
<div class="t" style="right:1109.5px;top:326.18px;font-size:6.8px;line-height:8.84px;color:#666;font-weight:normal;">0</div>
<div class="t" style="right:1109.5px;top:295.93px;font-size:6.8px;line-height:8.84px;color:#666;font-weight:normal;">10</div>
<div class="t" style="right:1109.5px;top:265.68px;font-size:6.8px;line-height:8.84px;color:#666;font-weight:normal;">20</div>
<div class="t" style="right:1109.5px;top:235.43px;font-size:6.8px;line-height:8.84px;color:#666;font-weight:normal;">30</div>
<div class="t" style="right:1109.5px;top:205.18px;font-size:6.8px;line-height:8.84px;color:#666;font-weight:normal;">40</div>
<div class="t" style="right:1109.5px;top:174.93px;font-size:6.8px;line-height:8.84px;color:#666;font-weight:normal;">50</div>
<div class="t" style="right:1109.5px;top:144.68px;font-size:6.8px;line-height:8.84px;color:#666;font-weight:normal;">60</div>
<div class="t" style="left:166.85px;transform:translateX(-50%);top:334.71px;font-size:6.9px;line-height:8.97px;color:#555;font-weight:normal;">2025-09-01</div>
<div class="t" style="left:216.65px;transform:translateX(-50%);top:334.71px;font-size:6.9px;line-height:8.97px;color:#555;font-weight:normal;">2025-09-07</div>
<div class="t" style="left:266.45px;transform:translateX(-50%);top:334.71px;font-size:6.9px;line-height:8.97px;color:#555;font-weight:normal;">2025-09-13</div>
<div class="t" style="left:316.25px;transform:translateX(-50%);top:334.71px;font-size:6.9px;line-height:8.97px;color:#555;font-weight:normal;">2025-09-19</div>
<div class="t" style="left:366.05px;transform:translateX(-50%);top:334.71px;font-size:6.9px;line-height:8.97px;color:#555;font-weight:normal;">2025-09-25</div>
<div class="t" style="left:415.85px;transform:translateX(-50%);top:334.71px;font-size:6.9px;line-height:8.97px;color:#555;font-weight:normal;">2025-10-01</div>
<div class="t" style="left:465.65px;transform:translateX(-50%);top:334.71px;font-size:6.9px;line-height:8.97px;color:#555;font-weight:normal;">2025-10-07</div>
<div class="t" style="left:515.45px;transform:translateX(-50%);top:334.71px;font-size:6.9px;line-height:8.97px;color:#555;font-weight:normal;">2025-10-13</div>
<div class="t" style="left:565.25px;transform:translateX(-50%);top:334.71px;font-size:6.9px;line-height:8.97px;color:#555;font-weight:normal;">2025-10-19</div>
<div class="t" style="left:615.05px;transform:translateX(-50%);top:334.71px;font-size:6.9px;line-height:8.97px;color:#555;font-weight:normal;">2025-10-25</div>
<div class="t" style="left:664.85px;transform:translateX(-50%);top:334.71px;font-size:6.9px;line-height:8.97px;color:#555;font-weight:normal;">2025-10-31</div>
<div class="t" style="left:714.65px;transform:translateX(-50%);top:334.71px;font-size:6.9px;line-height:8.97px;color:#555;font-weight:normal;">2025-11-06</div>
<div class="t" style="left:764.45px;transform:translateX(-50%);top:334.71px;font-size:6.9px;line-height:8.97px;color:#555;font-weight:normal;">2025-11-12</div>
<div class="t" style="left:847.45px;transform:translateX(-50%);top:334.71px;font-size:6.9px;line-height:8.97px;color:#555;font-weight:normal;">2025-11-22</div>
<div class="t" style="left:860.5px;top:327.08px;font-size:6.8px;line-height:8.84px;color:#555;font-weight:normal;"><span style="font-size:7px;letter-spacing:-0.2px;">日期</span></div>
<svg class="r" style="left:0px;top:0px;pointer-events:none;" width="1268" height="629" viewBox="0 0 1268 629"><path d="M213.8 139.8 H225.8" stroke="#5B8FF9" stroke-width="0.8"/><circle cx="219.8" cy="139.8" r="3" fill="#fff" stroke="#5B8FF9" stroke-width="0.9"/><path d="M274.1 139.8 H286.1" stroke="#5AD8A6" stroke-width="0.8"/><circle cx="280.1" cy="139.8" r="3" fill="#fff" stroke="#5AD8A6" stroke-width="0.9"/><path d="M327 139.8 H339" stroke="#5D7092" stroke-width="0.8"/><circle cx="333" cy="139.8" r="3" fill="#fff" stroke="#5D7092" stroke-width="0.9"/><path d="M411 139.8 H423" stroke="#F6BD16" stroke-width="0.8"/><circle cx="417" cy="139.8" r="3" fill="#fff" stroke="#F6BD16" stroke-width="0.9"/><path d="M479.9 139.8 H491.9" stroke="#6F5EF9" stroke-width="0.8"/><circle cx="485.9" cy="139.8" r="3" fill="#fff" stroke="#6F5EF9" stroke-width="0.9"/><path d="M548.4 139.8 H560.4" stroke="#6DC8EC" stroke-width="0.8"/><circle cx="554.4" cy="139.8" r="3" fill="#fff" stroke="#6DC8EC" stroke-width="0.9"/><path d="M608.4 139.8 H620.4" stroke="#945FB9" stroke-width="0.8"/><circle cx="614.4" cy="139.8" r="3" fill="#fff" stroke="#945FB9" stroke-width="0.9"/><path d="M654.3 139.8 H666.3" stroke="#FF9845" stroke-width="0.8"/><circle cx="660.3" cy="139.8" r="3" fill="#fff" stroke="#FF9845" stroke-width="0.9"/><path d="M740.1 139.8 H752.1" stroke="#1E9493" stroke-width="0.8"/><circle cx="746.1" cy="139.8" r="3" fill="#fff" stroke="#1E9493" stroke-width="0.9"/><path d="M774.5 139.8 H786.5" stroke="#FF99C3" stroke-width="0.8"/><circle cx="780.5" cy="139.8" r="3" fill="#fff" stroke="#FF99C3" stroke-width="0.9"/><path d="M833.9 139.8 H845.9" stroke="#5B8FF9" stroke-width="0.8"/><circle cx="839.9" cy="139.8" r="3" fill="#fff" stroke="#5B8FF9" stroke-width="0.9"/></svg>
<div class="t" style="left:229.4px;top:135.64px;font-size:6.4px;line-height:8.32px;color:#555;font-weight:normal;">Lin_ABAQUS</div>
<div class="t" style="left:290px;top:135.64px;font-size:6.4px;line-height:8.32px;color:#555;font-weight:normal;">Lin_Fluent</div>
<div class="t" style="left:342.9px;top:135.64px;font-size:6.4px;line-height:8.32px;color:#555;font-weight:normal;">Matlab2023<span style="font-size:7px;letter-spacing:-0.1px;">交互模式</span></div>
<div class="t" style="left:426.8px;top:135.64px;font-size:6.4px;line-height:8.32px;color:#555;font-weight:normal;">Lin_Mechanical</div>
<div class="t" style="left:495.1px;top:135.64px;font-size:6.4px;line-height:8.32px;color:#555;font-weight:normal;">Lin_Workbench</div>
<div class="t" style="left:564px;top:135.64px;font-size:6.4px;line-height:8.32px;color:#555;font-weight:normal;">Lin_Pycharm</div>
<div class="t" style="left:624px;top:135.64px;font-size:6.4px;line-height:8.32px;color:#555;font-weight:normal;">PyroSim</div>
<div class="t" style="left:670.7px;top:135.64px;font-size:6.4px;line-height:8.32px;color:#555;font-weight:normal;">Win_MaterialsStudio</div>
<div class="t" style="left:755.3px;top:135.64px;font-size:6.4px;line-height:8.32px;color:#555;font-weight:normal;"><span style="font-size:7px;letter-spacing:-0.1px;">其他</span></div>
<div class="t" style="left:790px;top:135.64px;font-size:6.4px;line-height:8.32px;color:#555;font-weight:normal;">Lin_Terminal</div>
<div class="t" style="left:849.7px;top:135.64px;font-size:6.4px;line-height:8.32px;color:#555;font-weight:normal;">cst2024</div>
<div class="t" style="left:896.8px;top:106.04px;font-size:8.4px;line-height:10.92px;color:#222;font-weight:bold;"><span style="font-size:8px;letter-spacing:0.65px;">应用启动记录</span></div>
<div class="t" style="left:896.8px;top:118.31px;font-size:6.9px;line-height:8.97px;color:#9a9a9a;font-weight:normal;"><span style="font-size:7px;letter-spacing:-0.4px;">时间</span>:&nbsp;&nbsp;&nbsp;2025-09-01 <span style="font-size:7px;letter-spacing:-0.4px;">至</span> 2025-11-22</div>
<div class="r" style="left:1213.3px;top:110.2px;width:40.4px;height:15.1px;border:1px solid #e6e8eb;border-radius:2px;background:#fff;"></div>
<div class="r" style="left:1234.1px;top:110.2px;width:0.7px;height:16.1px;background:#e6e8eb;"></div>
<svg class="r" style="left:1219px;top:113px;" width="11" height="10" viewBox="0 0 11 10"><rect x="1.2" y="1.2" width="7.6" height="6.8" fill="none" stroke="#333" stroke-width="0.9"/><path d="M3.7 1.2 V8 M6.3 1.2 V8" stroke="#333" stroke-width="0.9"/></svg>
<svg class="r" style="left:1239px;top:112.5px;" width="11" height="11" viewBox="0 0 11 11"><path d="M2 4.6 Q3 1.8 6 2 Q7.6 2.2 8.3 3.4" fill="none" stroke="#333" stroke-width="1.1"/><path d="M9 1.6 L9 4.4 L6.3 4.2 Z" fill="#333"/><path d="M9 6.2 Q8 9 5 8.8 Q3.4 8.6 2.7 7.4" fill="none" stroke="#333" stroke-width="1.1"/><path d="M2 9.2 L2 6.4 L4.7 6.6 Z" fill="#333"/></svg>
<div class="r" style="left:894px;top:130px;width:370px;height:18px;background:#f8f8f9;"></div>
<div class="r" style="left:894px;top:130px;width:370px;height:0.7px;background:#eceef1;"></div>
<div class="r" style="left:894px;top:147.3px;width:370px;height:1.0px;background:#e4e6ea;"></div>
<div class="r" style="left:1016.1px;top:130.7px;width:0.7px;height:16.6px;background:#e8eaec;"></div>
<div class="r" style="left:1137.9px;top:130.7px;width:0.7px;height:16.6px;background:#e8eaec;"></div>
<div class="r" style="left:1260px;top:130.7px;width:0.7px;height:16.6px;background:#e8eaec;"></div>
<div class="t" style="left:898.3px;top:135.39px;font-size:7.4px;line-height:9.62px;color:#333;font-weight:normal;"><span style="font-size:7px;letter-spacing:0.45px;">应用名</span></div>
<svg class="r" style="left:923px;top:136.3px;" width="8" height="7" viewBox="0 0 8 7"><path d="M1 1.2 H6.6 L4.4 3.8 V6 L3.2 5.2 V3.8 Z" fill="none" stroke="#777" stroke-width="0.7"/></svg>
<div class="t" style="left:1020.2px;top:135.39px;font-size:7.4px;line-height:9.62px;color:#333;font-weight:normal;"><span style="font-size:7px;letter-spacing:0.45px;">启动时间</span></div>
<svg class="r" style="left:1052.6px;top:136.3px;" width="8" height="7" viewBox="0 0 8 7"><path d="M1 1.2 H6.6 L4.4 3.8 V6 L3.2 5.2 V3.8 Z" fill="none" stroke="#777" stroke-width="0.7"/></svg>
<div class="t" style="left:1142px;top:135.39px;font-size:7.4px;line-height:9.62px;color:#333;font-weight:normal;"><span style="font-size:7px;letter-spacing:0.45px;">用户</span></div>
<svg class="r" style="left:1160px;top:136.3px;" width="8" height="7" viewBox="0 0 8 7"><path d="M1 1.2 H6.6 L4.4 3.8 V6 L3.2 5.2 V3.8 Z" fill="none" stroke="#777" stroke-width="0.7"/></svg>
<div class="t" style="left:898.4px;top:153.59px;font-size:7.7px;line-height:10.01px;color:#3b3b3b;font-weight:normal;">Lin_Comsol</div>
<div class="t" style="left:1021.4px;top:153.59px;font-size:7.7px;line-height:10.01px;color:#3b3b3b;font-weight:normal;">11-22 20:29:21</div>
<div class="t" style="left:1143px;top:153.59px;font-size:7.7px;line-height:10.01px;color:#3b3b3b;font-weight:normal;"><span style="font-size:8px;letter-spacing:-0.3px;">王欢</span>(200052)</div>
<div class="r" style="left:894px;top:169.2px;width:366px;height:0.7px;background:#e9ebee;"></div>
<div class="t" style="left:898.4px;top:175.09px;font-size:7.7px;line-height:10.01px;color:#3b3b3b;font-weight:normal;">Lin_ABAQUS</div>
<div class="t" style="left:1021.4px;top:175.09px;font-size:7.7px;line-height:10.01px;color:#3b3b3b;font-weight:normal;">11-22 18:35:43</div>
<div class="t" style="left:1143px;top:175.09px;font-size:7.7px;line-height:10.01px;color:#3b3b3b;font-weight:normal;"><span style="font-size:8px;letter-spacing:-0.3px;">赵红豆</span>(2023221059)</div>
<div class="r" style="left:894px;top:190.7px;width:366px;height:0.7px;background:#e9ebee;"></div>
<div class="t" style="left:898.4px;top:196.59px;font-size:7.7px;line-height:10.01px;color:#3b3b3b;font-weight:normal;">Win_MaterialsStudio</div>
<div class="t" style="left:1021.4px;top:196.59px;font-size:7.7px;line-height:10.01px;color:#3b3b3b;font-weight:normal;">11-22 17:23:34</div>
<div class="t" style="left:1143px;top:196.59px;font-size:7.7px;line-height:10.01px;color:#3b3b3b;font-weight:normal;"><span style="font-size:8px;letter-spacing:-0.3px;">倪祖扬</span>(2024225004)</div>
<div class="r" style="left:894px;top:212.2px;width:366px;height:0.7px;background:#e9ebee;"></div>
<div class="t" style="left:898.4px;top:218.09px;font-size:7.7px;line-height:10.01px;color:#3b3b3b;font-weight:normal;">Lin_Pycharm</div>
<div class="t" style="left:1021.4px;top:218.09px;font-size:7.7px;line-height:10.01px;color:#3b3b3b;font-weight:normal;">11-22 17:05:36</div>
<div class="t" style="left:1143px;top:218.09px;font-size:7.7px;line-height:10.01px;color:#3b3b3b;font-weight:normal;"><span style="font-size:8px;letter-spacing:-0.3px;">宁書涵</span>(2024124045)</div>
<div class="r" style="left:894px;top:233.7px;width:366px;height:0.7px;background:#e9ebee;"></div>
<div class="t" style="left:898.4px;top:239.59px;font-size:7.7px;line-height:10.01px;color:#3b3b3b;font-weight:normal;">Lin_Pycharm</div>
<div class="t" style="left:1021.4px;top:239.59px;font-size:7.7px;line-height:10.01px;color:#3b3b3b;font-weight:normal;">11-22 16:06:26</div>
<div class="t" style="left:1143px;top:239.59px;font-size:7.7px;line-height:10.01px;color:#3b3b3b;font-weight:normal;"><span style="font-size:8px;letter-spacing:-0.3px;">李磊</span>(2025226008)</div>
<div class="r" style="left:894px;top:255.2px;width:366px;height:0.7px;background:#e9ebee;"></div>
<div class="t" style="left:898.4px;top:261.1px;font-size:7.7px;line-height:10.01px;color:#3b3b3b;font-weight:normal;">Lin_GaussianView</div>
<div class="t" style="left:1021.4px;top:261.1px;font-size:7.7px;line-height:10.01px;color:#3b3b3b;font-weight:normal;">11-22 15:24:24</div>
<div class="t" style="left:1143px;top:261.1px;font-size:7.7px;line-height:10.01px;color:#3b3b3b;font-weight:normal;"><span style="font-size:8px;letter-spacing:-0.3px;">何皎洁</span>(170098)</div>
<div class="r" style="left:894px;top:276.7px;width:366px;height:0.7px;background:#e9ebee;"></div>
<div class="t" style="left:898.4px;top:282.6px;font-size:7.7px;line-height:10.01px;color:#3b3b3b;font-weight:normal;">Lin_GaussianView</div>
<div class="t" style="left:1021.4px;top:282.6px;font-size:7.7px;line-height:10.01px;color:#3b3b3b;font-weight:normal;">11-22 15:21:36</div>
<div class="t" style="left:1143px;top:282.6px;font-size:7.7px;line-height:10.01px;color:#3b3b3b;font-weight:normal;"><span style="font-size:8px;letter-spacing:-0.3px;">何皎洁</span>(170098)</div>
<div class="r" style="left:894px;top:298.2px;width:366px;height:0.7px;background:#e9ebee;"></div>
<div class="t" style="left:898.4px;top:304.1px;font-size:7.7px;line-height:10.01px;color:#3b3b3b;font-weight:normal;">Lin_GaussianView</div>
<div class="t" style="left:1021.4px;top:304.1px;font-size:7.7px;line-height:10.01px;color:#3b3b3b;font-weight:normal;">11-22 14:57:00</div>
<div class="t" style="left:1143px;top:304.1px;font-size:7.7px;line-height:10.01px;color:#3b3b3b;font-weight:normal;"><span style="font-size:8px;letter-spacing:-0.3px;">何皎洁</span>(170098)</div>
<div class="r" style="left:894px;top:319.7px;width:366px;height:0.7px;background:#e9ebee;"></div>
<div class="t" style="left:898.4px;top:325.6px;font-size:7.7px;line-height:10.01px;color:#3b3b3b;font-weight:normal;">Lin_GaussianView</div>
<div class="t" style="left:1021.4px;top:325.6px;font-size:7.7px;line-height:10.01px;color:#3b3b3b;font-weight:normal;">11-22 14:54:44</div>
<div class="t" style="left:1143px;top:325.6px;font-size:7.7px;line-height:10.01px;color:#3b3b3b;font-weight:normal;"><span style="font-size:8px;letter-spacing:-0.3px;">何皎洁</span>(170098)</div>
<div class="r" style="left:894px;top:335.6px;width:370px;height:0.7px;background:#eceef1;"></div>
<div class="r" style="left:1261px;top:148.5px;width:3px;height:81.5px;background:#767b8a;border-radius:1.5px;"></div>
<svg class="r" style="left:0px;top:0px;pointer-events:none;" width="1268" height="629" viewBox="0 0 1268 629"><path d="M936.5 345 V349 L934 347 Z M933.2 345 H933.8 V349 H933.2 Z" fill="#999"/></svg>
<svg class="r" style="left:0px;top:0px;pointer-events:none;" width="1268" height="629" viewBox="0 0 1268 629"><path d="M956.0 345 V349 L953.5 347 Z" fill="#999"/></svg>
<div class="r" style="left:968px;top:340.3px;width:13.7px;height:13.6px;background:#2d8cf0;border-radius:1px;"></div>
<div class="t" style="left:974.85px;transform:translateX(-50%);top:342.0px;font-size:7.7px;line-height:10.01px;color:#fff;font-weight:normal;">1</div>
<div class="t" style="left:994.4px;transform:translateX(-50%);top:342.0px;font-size:7.7px;line-height:10.01px;color:#444;font-weight:normal;">2</div>
<div class="t" style="left:1014.3px;transform:translateX(-50%);top:342.0px;font-size:7.7px;line-height:10.01px;color:#444;font-weight:normal;">3</div>
<div class="t" style="left:1034px;transform:translateX(-50%);top:342.0px;font-size:7.7px;line-height:10.01px;color:#444;font-weight:normal;">4</div>
<div class="t" style="left:1053.8px;transform:translateX(-50%);top:342.0px;font-size:7.7px;line-height:10.01px;color:#444;font-weight:normal;">5</div>
<div class="t" style="left:1073.6px;transform:translateX(-50%);top:342.0px;font-size:7.7px;line-height:10.01px;color:#444;font-weight:normal;">...</div>
<svg class="r" style="left:0px;top:0px;pointer-events:none;" width="1268" height="629" viewBox="0 0 1268 629"><path d="M1092.0 345 V349 L1094.5 347 Z" fill="#999"/></svg>
<svg class="r" style="left:0px;top:0px;pointer-events:none;" width="1268" height="629" viewBox="0 0 1268 629"><path d="M1112.0 345 V349 L1114.5 347 Z M1114.9 345 H1115.5 V349 H1114.9 Z" fill="#999"/></svg>
<div class="r" style="left:1130.3px;top:340.3px;width:31.2px;height:12.6px;border:1px solid #dcdee2;border-radius:1px;background:#fff;"></div>
<div class="t" style="left:1135px;top:342.0px;font-size:7.7px;line-height:10.01px;color:#444;font-weight:normal;">20</div>
<svg class="r" style="left:1153px;top:344px;" width="7" height="6" viewBox="0 0 7 6"><path d="M1 1.5 H5.4 L3.2 4.4 Z" fill="#555"/></svg>
<div class="t" style="left:1166.9px;top:342.0px;font-size:7.7px;line-height:10.01px;color:#444;font-weight:normal;"><span style="font-size:8px;letter-spacing:-0.3px;">条</span>/<span style="font-size:8px;letter-spacing:-0.3px;">页</span></div>
<div class="t" style="left:1195.6px;top:342.0px;font-size:7.7px;line-height:10.01px;color:#444;font-weight:normal;"><span style="font-size:8px;letter-spacing:-0.3px;">共</span> 2382 <span style="font-size:8px;letter-spacing:-0.3px;">条</span></div>
<div class="t" style="left:143.9px;top:368.94px;font-size:8.4px;line-height:10.92px;color:#222;font-weight:bold;"><span style="font-size:8px;letter-spacing:0.5px;">应用使用情况</span> (<span style="font-size:8px;letter-spacing:0.5px;">启动次数</span>)</div>
<div class="t" style="left:143.9px;top:382.81px;font-size:6.9px;line-height:8.97px;color:#9a9a9a;font-weight:normal;"><span style="font-size:7px;">时间</span>:&nbsp;&nbsp;&nbsp;2025-09-01 <span style="font-size:7px;">至</span> 2025-11-22</div>
<svg class="r" style="left:1226px;top:370px;" width="28" height="12" viewBox="0 0 28 12"><path d="M2 1 H6.5 L9 3.5 V10.5 H2 Z" fill="none" stroke="#bbb" stroke-width="0.8"/><path d="M3.5 5 H7.5 M3.5 6.8 H7.5 M3.5 8.5 H7.5" stroke="#bbb" stroke-width="0.6"/><path d="M20 1 V8 M17.3 5.5 L20 8.2 L22.7 5.5 M16 7.5 V10.5 H24 V7.5" fill="none" stroke="#bbb" stroke-width="0.8"/></svg>
<div class="t" style="left:162.6px;transform:translateX(-50%);top:396.58px;font-size:6.8px;line-height:8.84px;color:#666;font-weight:normal;"><span style="font-size:7px;letter-spacing:-0.2px;">次</span></div>
<svg class="r" style="left:0px;top:0px;pointer-events:none;" width="1268" height="629" viewBox="0 0 1268 629"><path d="M163 559.62 H1232.1" stroke="#eeeeee" stroke-width="0.8"/><path d="M163 523.04 H1232.1" stroke="#eeeeee" stroke-width="0.8"/><path d="M163 486.46 H1232.1" stroke="#eeeeee" stroke-width="0.8"/><path d="M163 449.88 H1232.1" stroke="#eeeeee" stroke-width="0.8"/><path d="M163 413.30 H1232.1" stroke="#eeeeee" stroke-width="0.8"/><path d="M213.91 413.30 V596.2" stroke="#eeeeee" stroke-width="0.8"/><path d="M264.82 413.30 V596.2" stroke="#eeeeee" stroke-width="0.8"/><path d="M315.73 413.30 V596.2" stroke="#eeeeee" stroke-width="0.8"/><path d="M366.64 413.30 V596.2" stroke="#eeeeee" stroke-width="0.8"/><path d="M417.55 413.30 V596.2" stroke="#eeeeee" stroke-width="0.8"/><path d="M468.46 413.30 V596.2" stroke="#eeeeee" stroke-width="0.8"/><path d="M519.37 413.30 V596.2" stroke="#eeeeee" stroke-width="0.8"/><path d="M570.28 413.30 V596.2" stroke="#eeeeee" stroke-width="0.8"/><path d="M621.19 413.30 V596.2" stroke="#eeeeee" stroke-width="0.8"/><path d="M672.10 413.30 V596.2" stroke="#eeeeee" stroke-width="0.8"/><path d="M723.00 413.30 V596.2" stroke="#eeeeee" stroke-width="0.8"/><path d="M773.91 413.30 V596.2" stroke="#eeeeee" stroke-width="0.8"/><path d="M824.82 413.30 V596.2" stroke="#eeeeee" stroke-width="0.8"/><path d="M875.73 413.30 V596.2" stroke="#eeeeee" stroke-width="0.8"/><path d="M926.64 413.30 V596.2" stroke="#eeeeee" stroke-width="0.8"/><path d="M977.55 413.30 V596.2" stroke="#eeeeee" stroke-width="0.8"/><path d="M1028.46 413.30 V596.2" stroke="#eeeeee" stroke-width="0.8"/><path d="M1079.37 413.30 V596.2" stroke="#eeeeee" stroke-width="0.8"/><path d="M1130.28 413.30 V596.2" stroke="#eeeeee" stroke-width="0.8"/><path d="M1181.19 413.30 V596.2" stroke="#eeeeee" stroke-width="0.8"/><path d="M1232.10 413.30 V596.2" stroke="#eeeeee" stroke-width="0.8"/><rect x="168.30" y="428.48" width="40.3" height="167.72" fill="#5B8FF9"/><rect x="219.21" y="503.84" width="40.3" height="92.36" fill="#CDDDFD"/><rect x="270.12" y="559.25" width="40.3" height="36.95" fill="#5AD8A6"/><rect x="321.03" y="564.38" width="40.3" height="31.82" fill="#CDF3E4"/><rect x="371.94" y="576.45" width="40.3" height="19.75" fill="#5D7092"/><rect x="422.85" y="580.84" width="40.3" height="15.36" fill="#CED4DE"/><rect x="473.76" y="583.03" width="40.3" height="13.17" fill="#F6BD16"/><rect x="524.67" y="585.04" width="40.3" height="11.16" fill="#FCEBB9"/><rect x="575.58" y="587.06" width="40.3" height="9.14" fill="#6F5EF9"/><rect x="626.49" y="588.70" width="40.3" height="7.50" fill="#D3CEFD"/><rect x="677.40" y="589.43" width="40.3" height="6.77" fill="#6DC8EC"/><rect x="728.31" y="590.53" width="40.3" height="5.67" fill="#D3EEF9"/><rect x="779.22" y="593.09" width="40.3" height="3.11" fill="#945FB9"/><rect x="830.13" y="593.27" width="40.3" height="2.93" fill="#DECFEA"/><rect x="881.04" y="593.64" width="40.3" height="2.56" fill="#FF9845"/><rect x="931.95" y="593.82" width="40.3" height="2.38" fill="#FFE0C7"/><rect x="982.86" y="594.01" width="40.3" height="2.19" fill="#1E9493"/><rect x="1033.77" y="594.37" width="40.3" height="1.83" fill="#BBDEDE"/><rect x="1084.68" y="594.74" width="40.3" height="1.46" fill="#FF99C3"/><rect x="1135.59" y="594.92" width="40.3" height="1.28" fill="#FFE0ED"/><rect x="1186.50" y="595.65" width="40.3" height="0.55" fill="#5B8FF9"/><path d="M163 413.30 V596.2" stroke="#9a9a9a" stroke-width="1.1"/><path d="M163 596.2 H1232.1" stroke="#555" stroke-width="1.1"/></svg>
<div class="t" style="left:188.45px;transform:translateX(-50%);top:417.56px;font-size:6.8px;line-height:8.84px;color:#444;font-weight:normal;">917</div>
<div class="t" style="left:188.45px;transform:translateX(-50%);top:598.78px;font-size:6.8px;line-height:8.84px;color:#444;font-weight:normal;">Lin_Pyc...</div>
<div class="t" style="left:239.36px;transform:translateX(-50%);top:492.92px;font-size:6.8px;line-height:8.84px;color:#444;font-weight:normal;">505</div>
<div class="t" style="left:239.36px;transform:translateX(-50%);top:598.78px;font-size:6.8px;line-height:8.84px;color:#444;font-weight:normal;">Win_Mat...</div>
<div class="t" style="left:290.27px;transform:translateX(-50%);top:548.33px;font-size:6.8px;line-height:8.84px;color:#444;font-weight:normal;">202</div>
<div class="t" style="left:290.27px;transform:translateX(-50%);top:598.78px;font-size:6.8px;line-height:8.84px;color:#444;font-weight:normal;">Lin_ABA...</div>
<div class="t" style="left:341.18px;transform:translateX(-50%);top:553.46px;font-size:6.8px;line-height:8.84px;color:#444;font-weight:normal;">174</div>
<div class="t" style="left:341.18px;transform:translateX(-50%);top:598.78px;font-size:6.8px;line-height:8.84px;color:#444;font-weight:normal;">Lin_Ter...</div>
<div class="t" style="left:392.09px;transform:translateX(-50%);top:565.53px;font-size:6.8px;line-height:8.84px;color:#444;font-weight:normal;">108</div>
<div class="t" style="left:392.09px;transform:translateX(-50%);top:598.78px;font-size:6.8px;line-height:8.84px;color:#444;font-weight:normal;">cst2024</div>
<div class="t" style="left:443.0px;transform:translateX(-50%);top:569.92px;font-size:6.8px;line-height:8.84px;color:#444;font-weight:normal;">84</div>
<div class="t" style="left:443.0px;transform:translateX(-50%);top:598.78px;font-size:6.8px;line-height:8.84px;color:#444;font-weight:normal;">Matlab2...</div>
<div class="t" style="left:493.91px;transform:translateX(-50%);top:572.11px;font-size:6.8px;line-height:8.84px;color:#444;font-weight:normal;">72</div>
<div class="t" style="left:493.91px;transform:translateX(-50%);top:598.78px;font-size:6.8px;line-height:8.84px;color:#444;font-weight:normal;">Lin_Flu...</div>
<div class="t" style="left:544.82px;transform:translateX(-50%);top:574.12px;font-size:6.8px;line-height:8.84px;color:#444;font-weight:normal;">61</div>
<div class="t" style="left:544.82px;transform:translateX(-50%);top:598.78px;font-size:6.8px;line-height:8.84px;color:#444;font-weight:normal;">Lin_Wor...</div>
<div class="t" style="left:595.73px;transform:translateX(-50%);top:576.14px;font-size:6.8px;line-height:8.84px;color:#444;font-weight:normal;">50</div>
<div class="t" style="left:595.73px;transform:translateX(-50%);top:598.78px;font-size:6.8px;line-height:8.84px;color:#444;font-weight:normal;">Lin_Mec...</div>
<div class="t" style="left:646.64px;transform:translateX(-50%);top:577.78px;font-size:6.8px;line-height:8.84px;color:#444;font-weight:normal;">41</div>
<div class="t" style="left:646.64px;transform:translateX(-50%);top:598.78px;font-size:6.8px;line-height:8.84px;color:#444;font-weight:normal;">PyroSim</div>
<div class="t" style="left:697.55px;transform:translateX(-50%);top:578.51px;font-size:6.8px;line-height:8.84px;color:#444;font-weight:normal;">37</div>
<div class="t" style="left:697.55px;transform:translateX(-50%);top:598.78px;font-size:6.8px;line-height:8.84px;color:#444;font-weight:normal;">Matlab2...</div>
<div class="t" style="left:748.46px;transform:translateX(-50%);top:579.61px;font-size:6.8px;line-height:8.84px;color:#444;font-weight:normal;">31</div>
<div class="t" style="left:748.46px;transform:translateX(-50%);top:598.78px;font-size:6.8px;line-height:8.84px;color:#444;font-weight:normal;">CST 201...</div>
<div class="t" style="left:799.37px;transform:translateX(-50%);top:582.17px;font-size:6.8px;line-height:8.84px;color:#444;font-weight:normal;">17</div>
<div class="t" style="left:799.37px;transform:translateX(-50%);top:598.78px;font-size:6.8px;line-height:8.84px;color:#444;font-weight:normal;">Win_PFC...</div>
<div class="t" style="left:850.28px;transform:translateX(-50%);top:582.35px;font-size:6.8px;line-height:8.84px;color:#444;font-weight:normal;">16</div>
<div class="t" style="left:850.28px;transform:translateX(-50%);top:598.78px;font-size:6.8px;line-height:8.84px;color:#444;font-weight:normal;">Lin_Gau...</div>
<div class="t" style="left:901.19px;transform:translateX(-50%);top:582.72px;font-size:6.8px;line-height:8.84px;color:#444;font-weight:normal;">14</div>
<div class="t" style="left:901.19px;transform:translateX(-50%);top:598.78px;font-size:6.8px;line-height:8.84px;color:#444;font-weight:normal;">Win_PFC...</div>
<div class="t" style="left:952.1px;transform:translateX(-50%);top:582.9px;font-size:6.8px;line-height:8.84px;color:#444;font-weight:normal;">13</div>
<div class="t" style="left:952.1px;transform:translateX(-50%);top:598.78px;font-size:6.8px;line-height:8.84px;color:#444;font-weight:normal;">ParaVie...</div>
<div class="t" style="left:1003.01px;transform:translateX(-50%);top:583.09px;font-size:6.8px;line-height:8.84px;color:#444;font-weight:normal;">12</div>
<div class="t" style="left:1003.01px;transform:translateX(-50%);top:598.78px;font-size:6.8px;line-height:8.84px;color:#444;font-weight:normal;">Lin_Com...</div>
<div class="t" style="left:1053.92px;transform:translateX(-50%);top:583.45px;font-size:6.8px;line-height:8.84px;color:#444;font-weight:normal;">10</div>
<div class="t" style="left:1053.92px;transform:translateX(-50%);top:598.78px;font-size:6.8px;line-height:8.84px;color:#444;font-weight:normal;">Lin_RSt...</div>
<div class="t" style="left:1104.83px;transform:translateX(-50%);top:583.82px;font-size:6.8px;line-height:8.84px;color:#444;font-weight:normal;">8</div>
<div class="t" style="left:1104.83px;transform:translateX(-50%);top:598.78px;font-size:6.8px;line-height:8.84px;color:#444;font-weight:normal;">Linux<span style="font-size:7px;letter-spacing:-0.1px;">桌面</span></div>
<div class="t" style="left:1155.74px;transform:translateX(-50%);top:584.0px;font-size:6.8px;line-height:8.84px;color:#444;font-weight:normal;">7</div>
<div class="t" style="left:1155.74px;transform:translateX(-50%);top:598.78px;font-size:6.8px;line-height:8.84px;color:#444;font-weight:normal;">Lin_Flu...</div>
<div class="t" style="left:1206.65px;transform:translateX(-50%);top:584.73px;font-size:6.8px;line-height:8.84px;color:#444;font-weight:normal;">3</div>
<div class="t" style="left:1206.65px;transform:translateX(-50%);top:598.78px;font-size:6.8px;line-height:8.84px;color:#444;font-weight:normal;"><span style="font-size:7px;letter-spacing:-0.1px;">其他</span></div>
<div class="t" style="right:1109.5px;top:591.78px;font-size:6.8px;line-height:8.84px;color:#666;font-weight:normal;">0</div>
<div class="t" style="right:1109.5px;top:555.2px;font-size:6.8px;line-height:8.84px;color:#666;font-weight:normal;">200</div>
<div class="t" style="right:1109.5px;top:518.62px;font-size:6.8px;line-height:8.84px;color:#666;font-weight:normal;">400</div>
<div class="t" style="right:1109.5px;top:482.04px;font-size:6.8px;line-height:8.84px;color:#666;font-weight:normal;">600</div>
<div class="t" style="right:1109.5px;top:445.46px;font-size:6.8px;line-height:8.84px;color:#666;font-weight:normal;">800</div>
<div class="t" style="right:1109.5px;top:408.88px;font-size:6.8px;line-height:8.84px;color:#666;font-weight:normal;">1,000</div>
<div class="t" style="left:1240px;top:589.08px;font-size:6.8px;line-height:8.84px;color:#555;font-weight:normal;"><span style="font-size:7px;letter-spacing:-0.2px;">应用</span></div>
</body></html>
